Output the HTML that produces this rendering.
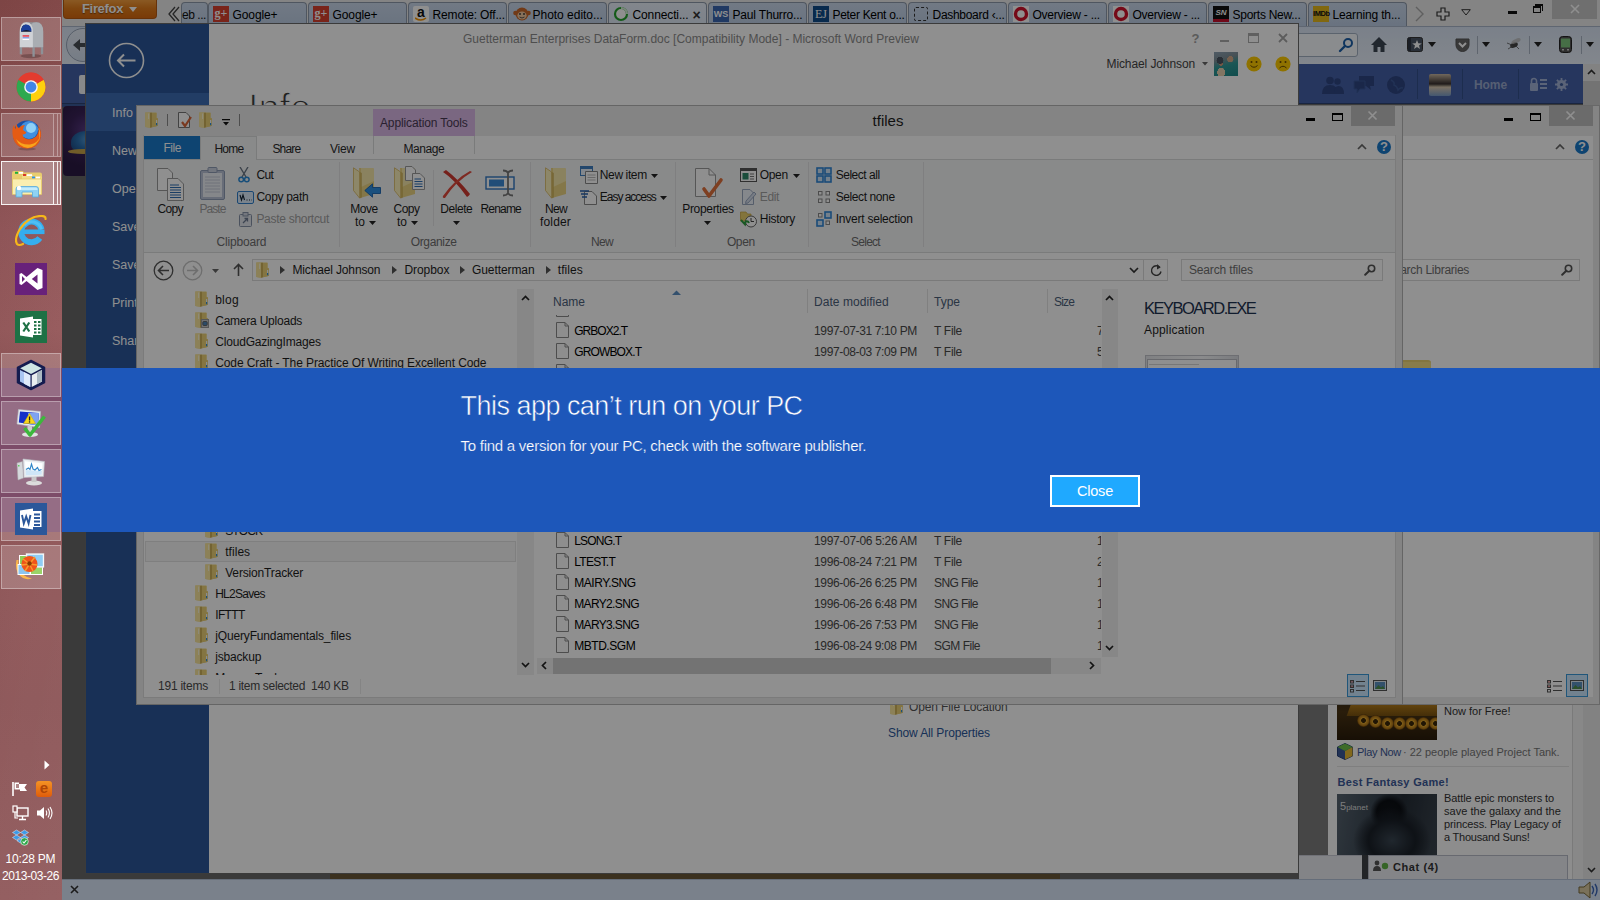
<!DOCTYPE html><html><head><meta charset="utf-8"><title>This app can't run on your PC</title><style>

html,body{margin:0;padding:0;}
body{width:1600px;height:900px;overflow:hidden;position:relative;background:#686868;font-family:"Liberation Sans", sans-serif;}
div,svg{position:absolute;box-sizing:border-box;}
.t{white-space:pre;}
.win{overflow:hidden;}

</style></head><body>
<div id="firefox" style="left:62px;top:0;width:1538px;height:900px;background:#686868;overflow:hidden">
<div style="left:0px;top:0px;width:1538px;height:26px;background:#ebebeb"></div>
<div style="left:1px;top:0px;width:94px;height:19px;background:linear-gradient(#f6a040,#e27d1c 45%,#d8690e);border:1px solid #b85a10;border-top:none;border-radius:0 0 4px 4px"></div>
<div class="t" style="left:20px;top:0.0px;height:18px;line-height:18px;font-size:13px;color:#fff;font-weight:bold;text-shadow:0 1px 1px rgba(0,0,0,.4);letter-spacing:-0.33px">Firefox</div>
<svg style="left:67px;top:7px;" width="8" height="5" viewBox="0 0 8 5"><path d="M0 0 H8 L4 5 Z" fill="#fff"/></svg>
<svg style="left:104px;top:5px;" width="14" height="18" viewBox="0 0 14 18"><path d="M9 2 L3 9 L9 16 M13 2 L7 9 L13 16" fill="none" stroke="#444" stroke-width="1.3"/></svg>
<div style="left:119px;top:2px;width:27px;height:24px;background:linear-gradient(#cbd9ec,#bccde4);border:1px solid #8e9aab;border-bottom:none;border-radius:4px 4px 0 0"></div>
<div class="t" style="left:120px;top:6.5px;height:17px;line-height:17px;font-size:12px;color:#111;letter-spacing:-0.45px">eb ...</div>
<div style="left:146px;top:2px;width:99px;height:24px;background:linear-gradient(#cbd9ec,#bccde4);border:1px solid #8e9aab;border-bottom:none;border-radius:4px 4px 0 0"></div>
<div style="left:151px;top:6px;width:16px;height:16px;background:#d8412f;color:#fff;font-size:12px;font-weight:bold;line-height:15px;text-align:center;font-family:'Liberation Serif',serif">g+</div>
<div class="t" style="left:170.5px;top:6.5px;height:17px;line-height:17px;font-size:12px;color:#000;letter-spacing:-0.10px">Google+</div>
<div style="left:246px;top:2px;width:99px;height:24px;background:linear-gradient(#cbd9ec,#bccde4);border:1px solid #8e9aab;border-bottom:none;border-radius:4px 4px 0 0"></div>
<div style="left:251px;top:6px;width:16px;height:16px;background:#d8412f;color:#fff;font-size:12px;font-weight:bold;line-height:15px;text-align:center;font-family:'Liberation Serif',serif">g+</div>
<div class="t" style="left:270.5px;top:6.5px;height:17px;line-height:17px;font-size:12px;color:#000;letter-spacing:-0.10px">Google+</div>
<div style="left:346px;top:2px;width:99px;height:24px;background:linear-gradient(#cbd9ec,#bccde4);border:1px solid #8e9aab;border-bottom:none;border-radius:4px 4px 0 0"></div>
<div style="left:351px;top:6px;width:16px;height:16px;background:#fff;color:#111;font-size:14px;font-weight:bold;line-height:12px;text-align:center;border-radius:2px">a</div>
<svg style="left:353px;top:17px;" width="12" height="5" viewBox="0 0 12 5"><path d="M0 1 Q6 5 11 1" fill="none" stroke="#f79400" stroke-width="1.6"/></svg>
<div class="t" style="left:370.5px;top:6.5px;height:17px;line-height:17px;font-size:12px;color:#000;letter-spacing:-0.14px">Remote: Off...</div>
<div style="left:446px;top:2px;width:99px;height:24px;background:linear-gradient(#cbd9ec,#bccde4);border:1px solid #8e9aab;border-bottom:none;border-radius:4px 4px 0 0"></div>
<svg style="left:451px;top:6px;" width="18" height="16" viewBox="0 0 18 16"><circle cx="9" cy="8" r="6.5" fill="#c9682a"/><circle cx="2.5" cy="7" r="2.3" fill="#c9682a"/><circle cx="15.5" cy="7" r="2.3" fill="#c9682a"/><ellipse cx="9" cy="9.5" rx="4.6" ry="4" fill="#f2c9a0"/><circle cx="7" cy="8" r=".9" fill="#333"/><circle cx="11" cy="8" r=".9" fill="#333"/><path d="M6.5 11 Q9 13 11.5 11" stroke="#333" fill="none" stroke-width=".8"/></svg>
<div class="t" style="left:470.5px;top:6.5px;height:17px;line-height:17px;font-size:12px;color:#000;letter-spacing:-0.02px">Photo edito...</div>
<div style="left:546px;top:2px;width:99px;height:24px;background:linear-gradient(#e9f0fa,#dde8f6);border:1px solid #8e9aab;border-bottom:none;border-radius:4px 4px 0 0"></div>
<svg style="left:551px;top:6px;" width="16" height="16" viewBox="0 0 16 16"><circle cx="8" cy="8" r="6" fill="#fff" stroke="#27a22d" stroke-width="2.2"/><path d="M8 2 A6 6 0 0 1 14 8" fill="none" stroke="#d5efd6" stroke-width="2.2"/></svg>
<div class="t" style="left:570.5px;top:6.5px;height:17px;line-height:17px;font-size:12px;color:#000;letter-spacing:-0.12px">Connecti...</div>
<div class="t" style="left:630.5px;top:4.5px;height:20px;line-height:20px;font-size:14px;color:#333;font-weight:bold">×</div>
<div style="left:646px;top:2px;width:99px;height:24px;background:linear-gradient(#cbd9ec,#bccde4);border:1px solid #8e9aab;border-bottom:none;border-radius:4px 4px 0 0"></div>
<div style="left:651px;top:6px;width:16px;height:16px;background:#3a66b0;color:#fff;font-size:9px;font-weight:bold;line-height:16px;text-align:center">WS</div>
<div class="t" style="left:670.5px;top:6.5px;height:17px;line-height:17px;font-size:12px;color:#000;letter-spacing:-0.18px">Paul Thurro...</div>
<div style="left:746px;top:2px;width:99px;height:24px;background:linear-gradient(#cbd9ec,#bccde4);border:1px solid #8e9aab;border-bottom:none;border-radius:4px 4px 0 0"></div>
<div style="left:751px;top:6px;width:16px;height:16px;background:#0f4c8a;color:#fff;font-size:12px;line-height:16px;text-align:center;font-family:'Liberation Serif',serif">EJ</div>
<div class="t" style="left:770.5px;top:6.5px;height:17px;line-height:17px;font-size:12px;color:#000;letter-spacing:-0.31px">Peter Kent o...</div>
<div style="left:846px;top:2px;width:99px;height:24px;background:linear-gradient(#cbd9ec,#bccde4);border:1px solid #8e9aab;border-bottom:none;border-radius:4px 4px 0 0"></div>
<div style="left:852px;top:7px;width:14px;height:14px;border:1px dashed #333;border-radius:2px"></div>
<div class="t" style="left:870.5px;top:6.5px;height:17px;line-height:17px;font-size:12px;color:#000;letter-spacing:-0.29px">Dashboard ‹...</div>
<div style="left:946px;top:2px;width:99px;height:24px;background:linear-gradient(#cbd9ec,#bccde4);border:1px solid #8e9aab;border-bottom:none;border-radius:4px 4px 0 0"></div>
<svg style="left:951px;top:6px;" width="16" height="16" viewBox="0 0 16 16"><rect width="16" height="16" fill="#fff"/><circle cx="8" cy="8" r="5.5" fill="none" stroke="#d0112b" stroke-width="3.4"/></svg>
<div class="t" style="left:970.5px;top:6.5px;height:17px;line-height:17px;font-size:12px;color:#000;letter-spacing:-0.23px">Overview - ...</div>
<div style="left:1046px;top:2px;width:99px;height:24px;background:linear-gradient(#cbd9ec,#bccde4);border:1px solid #8e9aab;border-bottom:none;border-radius:4px 4px 0 0"></div>
<svg style="left:1051px;top:6px;" width="16" height="16" viewBox="0 0 16 16"><rect width="16" height="16" fill="#fff"/><circle cx="8" cy="8" r="5.5" fill="none" stroke="#d0112b" stroke-width="3.4"/></svg>
<div class="t" style="left:1070.5px;top:6.5px;height:17px;line-height:17px;font-size:12px;color:#000;letter-spacing:-0.23px">Overview - ...</div>
<div style="left:1146px;top:2px;width:99px;height:24px;background:linear-gradient(#cbd9ec,#bccde4);border:1px solid #8e9aab;border-bottom:none;border-radius:4px 4px 0 0"></div>
<div style="left:1151px;top:6px;width:16px;height:16px;background:#111;color:#fff;font-size:8px;font-weight:bold;font-style:italic;line-height:14px;text-align:center;border-bottom:3px solid #c8102e">SN</div>
<div class="t" style="left:1170.5px;top:6.5px;height:17px;line-height:17px;font-size:12px;color:#000;letter-spacing:-0.26px">Sports New...</div>
<div style="left:1246px;top:2px;width:99px;height:24px;background:linear-gradient(#cbd9ec,#bccde4);border:1px solid #8e9aab;border-bottom:none;border-radius:4px 4px 0 0"></div>
<div style="left:1251px;top:6px;width:16px;height:16px;background:#e6b91e;color:#111;font-size:7.5px;font-weight:bold;line-height:16px;text-align:center;letter-spacing:-.4px">IMDb</div>
<div class="t" style="left:1270.5px;top:6.5px;height:17px;line-height:17px;font-size:12px;color:#000;letter-spacing:-0.15px">Learning th...</div>
<svg style="left:1352px;top:5px;" width="12" height="18" viewBox="0 0 12 18"><path d="M2 2 L9 9 L2 16" fill="none" stroke="#aaa" stroke-width="1.4"/></svg>
<svg style="left:1374px;top:7px;" width="14" height="14" viewBox="0 0 14 14"><path d="M5 1 H9 V5 H13 V9 H9 V13 H5 V9 H1 V5 H5 Z" fill="#f4f4f4" stroke="#333" stroke-width="1.2"/></svg>
<svg style="left:1399px;top:9px;" width="10" height="7" viewBox="0 0 10 7"><path d="M.7 .7 H9.3 L5 6 Z" fill="#f4f4f4" stroke="#333" stroke-width="1"/></svg>
<div style="left:1446px;top:11px;width:9px;height:3px;background:#111"></div>
<div style="left:1471px;top:6px;width:8px;height:7px;border:1px solid #111;border-top-width:2px"></div>
<div style="left:1473px;top:4px;width:8px;height:7px;border:1px solid #111;border-top-width:2px;border-left:none;border-bottom:none"></div>
<div style="left:1490px;top:0px;width:45px;height:19px;background:#c7c7c7"></div>
<svg style="left:1508px;top:4px;" width="10" height="10" viewBox="0 0 10 10"><path d="M1 1 L9 9 M9 1 L1 9" stroke="#fff" stroke-width="1.6"/></svg>
<div style="left:0px;top:26px;width:1538px;height:38px;background:linear-gradient(#dae5f5,#e9f0fa);border-top:1px solid #aab7c9"></div>
<div style="left:4px;top:28px;width:34px;height:34px;border-radius:50%;background:linear-gradient(#e6edf8,#d3deee);border:1px solid #9aa6ba"></div>
<svg style="left:10px;top:36px;" width="18" height="18" viewBox="0 0 18 18"><path d="M16 7 H8 V3 L1 9 L8 15 V11 H16 Z" fill="#4a4f57"/></svg>
<div style="left:1138px;top:33px;width:158px;height:24px;background:#f6f9fd;border:1px solid #a3b0c3;border-radius:3px"></div>
<svg style="left:1276px;top:37px;" width="16" height="16" viewBox="0 0 16 16"><circle cx="10" cy="6" r="4" fill="none" stroke="#1c5fa8" stroke-width="2"/><path d="M7 9 L2 14" stroke="#1c5fa8" stroke-width="2.4" stroke-linecap="round"/></svg>
<svg style="left:1308px;top:36px;" width="18" height="17" viewBox="0 0 18 17"><path d="M9 1 L1 9 H3.5 V16 H7.5 V11 H10.5 V16 H14.5 V9 H17 Z" fill="#3c4652"/></svg>
<svg style="left:1345px;top:37px;" width="16" height="15" viewBox="0 0 16 15"><rect x=".5" y=".5" width="15" height="14" rx="2" fill="#4a5564" stroke="#333"/><rect x="1" y="1" width="3" height="13" fill="#2f3742"/><path d="M10 3 L11.3 6.3 L14.8 6.4 L12 8.6 L13 12 L10 10 L7 12 L8 8.6 L5.2 6.4 L8.7 6.3 Z" fill="#fff"/></svg>
<svg style="left:1366px;top:42px;" width="8" height="5" viewBox="0 0 8 5"><path d="M0 0 H8 L4 5 Z" fill="#222"/></svg>
<svg style="left:1393px;top:38px;" width="15" height="14" viewBox="0 0 15 14"><path d="M1 1 H14 V7 A6.5 6.5 0 0 1 1 7 Z" fill="#666" stroke="#555"/><path d="M4 5 L7.5 8.5 L11 5" fill="none" stroke="#fff" stroke-width="2"/></svg>
<div style="left:1415px;top:36px;width:1px;height:18px;background:#a9b4c4"></div>
<svg style="left:1420px;top:42px;" width="8" height="5" viewBox="0 0 8 5"><path d="M0 0 H8 L4 5 Z" fill="#222"/></svg>
<svg style="left:1443px;top:36px;" width="18" height="16" viewBox="0 0 18 16"><ellipse cx="9" cy="9" rx="4" ry="2.6" fill="#444" transform="rotate(-25 9 9)"/><ellipse cx="11" cy="5" rx="5" ry="2" fill="#bbb" opacity=".8" transform="rotate(-25 11 5)"/><path d="M2 7 L7 9 M3 13 L8 10 M14 13 L11 10" stroke="#555" stroke-width=".8"/></svg>
<div style="left:1467px;top:36px;width:1px;height:18px;background:#a9b4c4"></div>
<svg style="left:1472px;top:42px;" width="8" height="5" viewBox="0 0 8 5"><path d="M0 0 H8 L4 5 Z" fill="#222"/></svg>
<svg style="left:1497px;top:36px;" width="13" height="17" viewBox="0 0 13 17"><rect x=".5" y=".5" width="12" height="16" rx="3" fill="#555" stroke="#222"/><rect x="2" y="2.5" width="9" height="9" fill="#7ec47e"/><rect x="3" y="13" width="2" height="1.5" fill="#ccc"/><rect x="8" y="13" width="2" height="1.5" fill="#ccc"/></svg>
<div style="left:1519px;top:36px;width:1px;height:18px;background:#a9b4c4"></div>
<svg style="left:1524px;top:42px;" width="8" height="5" viewBox="0 0 8 5"><path d="M0 0 H8 L4 5 Z" fill="#222"/></svg>
<div style="left:0px;top:64px;width:1521px;height:40px;background:#4561a8;border-bottom:1px solid #2d4373"></div>
<svg style="left:1260px;top:75px;" width="22" height="20" viewBox="0 0 22 20"><circle cx="8" cy="5.5" r="3.8" fill="#2f4682"/><path d="M0 19 Q0 10 8 10 Q16 10 16 19 Z" fill="#2f4682"/><circle cx="15.5" cy="6.5" r="3.2" fill="#2f4682"/><path d="M12 19 Q12 11 16.5 11 Q22 11 22 19 Z" fill="#2f4682"/></svg>
<svg style="left:1291px;top:75px;" width="22" height="20" viewBox="0 0 22 20"><path d="M6 1 H21 V11 H17 L18 15 L13 11 H6 Z" fill="#2f4682"/><path d="M1 6 H12 V14 H7 L4 18 V14 H1 Z" fill="#2f4682" stroke="#3b5998" stroke-width="1"/></svg>
<svg style="left:1324px;top:75px;" width="20" height="20" viewBox="0 0 20 20"><circle cx="10" cy="10" r="9" fill="#2f4682"/><path d="M5 5 Q9 7 8 10 Q11 11 12 15 Q14 12 17 13" stroke="#3b5998" stroke-width="1.5" fill="none"/></svg>
<div style="left:1355px;top:69px;width:1px;height:30px;background:#34508b"></div>
<div style="left:1367px;top:74px;width:22px;height:22px;background:linear-gradient(180deg,#c9b8a4 0%,#3a3230 45%,#d9c8b0 60%,#7a9cc8 100%);border-radius:2px"></div>
<div style="left:1400px;top:69px;width:1px;height:30px;background:#34508b"></div>
<div class="t" style="left:1412px;top:76.5px;height:17px;line-height:17px;font-size:12px;color:#9aa9cd;font-weight:bold;letter-spacing:-0.09px">Home</div>
<div style="left:1456px;top:69px;width:1px;height:30px;background:#34508b"></div>
<svg style="left:1468px;top:77px;" width="17" height="14" viewBox="0 0 17 14"><rect x="0" y="6" width="8" height="8" rx="1" fill="#a3b2d6"/><path d="M1.5 6 V4 A2.5 2.5 0 0 1 6.500 4 V6" fill="none" stroke="#a3b2d6" stroke-width="1.6"/><rect x="10" y="2" width="7" height="2" fill="#a3b2d6"/><rect x="10" y="6" width="7" height="2" fill="#a3b2d6"/><rect x="10" y="10" width="7" height="2" fill="#a3b2d6"/></svg>
<svg style="left:1493px;top:78px;" width="13" height="13" viewBox="0 0 13 13"><circle cx="6.5" cy="6.5" r="3.4" fill="none" stroke="#a3b2d6" stroke-width="2.4"/><path d="M6.5 0 V13 M0 6.5 H13 M1.9 1.9 L11.1 11.1 M11.1 1.9 L1.9 11.1" stroke="#a3b2d6" stroke-width="1.8"/><circle cx="6.5" cy="6.5" r="1.6" fill="#3b5998"/></svg>
<div style="left:1521px;top:64px;width:17px;height:815px;background:#e8e8e8"></div>
<svg style="left:1525px;top:69px;" width="9" height="6" viewBox="0 0 9 6"><path d="M1 5 L4.5 1.500 L8 5" fill="none" stroke="#333" stroke-width="1.6"/></svg>
<div style="left:1521px;top:81px;width:17px;height:30px;background:#cdcdcd"></div>
<svg style="left:1525px;top:867px;" width="9" height="6" viewBox="0 0 9 6"><path d="M1 1 L4.5 4.500 L8 1" fill="none" stroke="#333" stroke-width="1.6"/></svg>
<div style="left:0px;top:104px;width:40px;height:3px;background:#3b5998"></div>
<div style="left:17px;top:75px;width:30px;height:19px;background:#f3f4f7;border-radius:2px 0 0 2px"></div>
<div style="left:1px;top:106px;width:40px;height:70px;background:radial-gradient(circle at 60% 35%,#5a3a86 0,#3a2258 35%,#2c1a44 70%);border-radius:4px 0 0 4px"></div>
<div style="left:9px;top:131px;width:30px;height:22px;background:radial-gradient(ellipse at 60% 40%,#5aa0d8 0,#2a6fb0 45%,#1f4f8a 80%);border-radius:50% 50% 40% 40%"></div>
<div style="left:6px;top:149px;width:30px;height:5px;background:#c9a64a;border-radius:50%"></div>
<div style="left:1237px;top:690px;width:29px;height:190px;background:#7d7d7d"></div>
<div style="left:1266px;top:690px;width:245px;height:190px;background:#fbfbfb;border-right:1px solid #d9d9d9"></div>
<div style="left:1511px;top:690px;width:10px;height:190px;background:#f3f3f3"></div>
<div style="left:1275px;top:700px;width:100px;height:40px;overflow:hidden;background:linear-gradient(#3a2c18 0,#4a3414 30%,#2a1c0a 100%)">
<div style="left:12px;top:3px;width:95px;height:13px;background:linear-gradient(#b8801c,#7a5210);transform:skewX(-20deg)"></div>
<div style="left:20px;top:14px;width:13px;height:13px;border-radius:50%;background:radial-gradient(circle,#3a2608 0,#3a2608 22%,#e0a52c 30%,#b67a18 55%,#5a3a0c 70%)"></div>
<div style="left:32px;top:15px;width:13px;height:13px;border-radius:50%;background:radial-gradient(circle,#3a2608 0,#3a2608 22%,#e0a52c 30%,#b67a18 55%,#5a3a0c 70%)"></div>
<div style="left:44px;top:17px;width:13px;height:13px;border-radius:50%;background:radial-gradient(circle,#3a2608 0,#3a2608 22%,#e0a52c 30%,#b67a18 55%,#5a3a0c 70%)"></div>
<div style="left:56px;top:17px;width:13px;height:13px;border-radius:50%;background:radial-gradient(circle,#3a2608 0,#3a2608 22%,#e0a52c 30%,#b67a18 55%,#5a3a0c 70%)"></div>
<div style="left:68px;top:17px;width:13px;height:13px;border-radius:50%;background:radial-gradient(circle,#3a2608 0,#3a2608 22%,#e0a52c 30%,#b67a18 55%,#5a3a0c 70%)"></div>
<div style="left:80px;top:17px;width:13px;height:13px;border-radius:50%;background:radial-gradient(circle,#3a2608 0,#3a2608 22%,#e0a52c 30%,#b67a18 55%,#5a3a0c 70%)"></div>
<div style="left:92px;top:17px;width:13px;height:13px;border-radius:50%;background:radial-gradient(circle,#3a2608 0,#3a2608 22%,#e0a52c 30%,#b67a18 55%,#5a3a0c 70%)"></div>
</div>
<div class="t" style="left:1382px;top:703.5px;height:15px;line-height:15px;font-size:11px;color:#333;letter-spacing:-0.01px">Now for Free!</div>
<svg style="left:1275px;top:743px;" width="16" height="17" viewBox="0 0 16 17"><path d="M8 .5 L15.5 4 V13 L8 16.5 L.5 13 V4 Z" fill="#3b5998" stroke="#27407a"/><path d="M8 8 L15.5 4 V13 L8 16.5 Z" fill="#e8b930"/><path d="M8 .5 L15.5 4 L8 8 L.5 4 Z" fill="#6fc04a"/></svg>
<div class="t" style="left:1295px;top:744.5px;height:15px;line-height:15px;font-size:11px;color:#3b5998;letter-spacing:-0.31px">Play Now</div>
<div class="t" style="left:1341px;top:744.5px;height:15px;line-height:15px;font-size:11px;color:#777;letter-spacing:-0.01px">· 22 people played Project Tank.</div>
<div style="left:1275px;top:766px;width:232px;height:1px;background:#e3e3e3"></div>
<div class="t" style="left:1275.5px;top:774.5px;height:15px;line-height:15px;font-size:11px;color:#3b5998;font-weight:bold;letter-spacing:0.32px">Best Fantasy Game!</div>
<div style="left:1275px;top:794px;width:100px;height:62px;background:radial-gradient(ellipse at 55% 75%,#3a4652 0,#1a2028 30%,transparent 50%),radial-gradient(circle at 52% 30%,#10141a 0,#0c0f14 18%,transparent 28%),linear-gradient(100deg,#56636f 0,#3c4854 35%,#252d36 60%,#3a444e 100%)"></div>
<div class="t" style="left:1278px;top:798.5px;height:15px;line-height:15px;font-size:11px;color:#ddd;">5<span style='font-size:8px'>planet</span></div>
<div class="t" style="left:1382px;top:790.5px;height:15px;line-height:15px;font-size:11px;color:#333;letter-spacing:-0.08px">Battle epic monsters to</div>
<div class="t" style="left:1382px;top:803.5px;height:15px;line-height:15px;font-size:11px;color:#333;letter-spacing:0.03px">save the galaxy and the</div>
<div class="t" style="left:1382px;top:816.5px;height:15px;line-height:15px;font-size:11px;color:#333;letter-spacing:-0.11px">princess. Play Legacy of</div>
<div class="t" style="left:1382px;top:829.5px;height:15px;line-height:15px;font-size:11px;color:#333;letter-spacing:-0.22px">a Thousand Suns!</div>
<div style="left:1237px;top:855px;width:70px;height:24px;background:#e9ebf0;border-top:1px solid #c9ccd6"></div>
<div style="left:1300px;top:855px;width:6px;height:24px;background:#3d4046"></div>
<div style="left:1306px;top:855px;width:200px;height:24px;background:#eceef3;border:1px solid #b8bcc8;border-bottom:none"></div>
<svg style="left:1311px;top:860px;" width="18" height="12" viewBox="0 0 18 12"><circle cx="4" cy="3" r="2.4" fill="#555"/><path d="M0 11 Q0 6 4 6 Q8 6 8 11 Z" fill="#555"/><circle cx="12" cy="6" r="3.2" fill="#5fb346"/></svg>
<div class="t" style="left:1331px;top:859.5px;height:15px;line-height:15px;font-size:11px;color:#333;font-weight:bold;letter-spacing:0.59px">Chat (4)</div>
<div style="left:0px;top:873px;width:1237px;height:6px;background:#686868"></div>
<div style="left:268px;top:873px;width:730px;height:6px;background:#6a5838"></div>
<div style="left:0px;top:879px;width:1538px;height:21px;background:#dae6f8;border-top:1px solid #b5c3d8"></div>
<svg style="left:8px;top:885px;" width="9" height="9" viewBox="0 0 9 9"><path d="M1 1 L8 8 M8 1 L1 8" stroke="#333" stroke-width="1.6"/></svg>
<svg style="left:1516px;top:881px;" width="22" height="18" viewBox="0 0 22 18"><path d="M1 6 H6 L12 1 V17 L6 12 H1 Z" fill="#d9c9a0" stroke="#7a6a3a"/><path d="M14 5 Q17 9 14 13 M17 3 Q21 9 17 15" fill="none" stroke="#3c66b8" stroke-width="1.4"/></svg>
</div>
<div id="word" class="win" style="left:85px;top:23px;width:1214px;height:851px;background:#fff;border:1px solid #6a6a6a">
<div style="left:0px;top:0px;width:123px;height:850px;background:#2b579a"></div>
<div style="left:0px;top:69px;width:123px;height:38px;background:#3e6db5"></div>
<svg style="left:22px;top:18px;" width="37" height="37" viewBox="0 0 37 37"><circle cx="18.5" cy="18.5" r="17" fill="none" stroke="#fff" stroke-width="1.6"/><path d="M27.500 18.500 H10.500 M16 12.500 L10 18.500 L16 24.500" fill="none" stroke="#fff" stroke-width="2"/></svg>
<div class="t" style="left:26px;top:80.0px;height:18px;line-height:18px;font-size:12.5px;color:#fff;">Info</div>
<div class="t" style="left:26px;top:118.0px;height:18px;line-height:18px;font-size:12.5px;color:#fff;">New</div>
<div class="t" style="left:26px;top:156.0px;height:18px;line-height:18px;font-size:12.5px;color:#fff;">Open</div>
<div class="t" style="left:26px;top:194.0px;height:18px;line-height:18px;font-size:12.5px;color:#fff;">Save</div>
<div class="t" style="left:26px;top:232.0px;height:18px;line-height:18px;font-size:12.5px;color:#fff;">Save As</div>
<div class="t" style="left:26px;top:270.0px;height:18px;line-height:18px;font-size:12.5px;color:#fff;">Print</div>
<div class="t" style="left:26px;top:308.0px;height:18px;line-height:18px;font-size:12.5px;color:#fff;">Share</div>
<div class="t" style="left:26px;top:346.0px;height:18px;line-height:18px;font-size:12.5px;color:#fff;">Export</div>
<div class="t" style="left:26px;top:384.0px;height:18px;line-height:18px;font-size:12.5px;color:#fff;">Close</div>
<div class="t" style="left:377px;top:6.5px;height:17px;line-height:17px;font-size:12px;color:#8b8b8b;">Guetterman Enterprises DataForm.doc [Compatibility Mode] - Microsoft Word Preview</div>
<div class="t" style="left:1105.5px;top:5.5px;height:18px;line-height:18px;font-size:13px;color:#a3a3a3;font-weight:bold">?</div>
<div style="left:1134px;top:16px;width:9px;height:2px;background:#ababab"></div>
<div style="left:1162px;top:9px;width:11px;height:10px;border:1px solid #ababab;border-top-width:3px"></div>
<svg style="left:1192px;top:9px;" width="10" height="10" viewBox="0 0 10 10"><path d="M1 1 L9 9 M9 1 L1 9" stroke="#a5a5a5" stroke-width="1.8"/></svg>
<div class="t" style="left:1020.5px;top:32.0px;height:17px;line-height:17px;font-size:12px;color:#444;letter-spacing:-0.10px">Michael Johnson</div>
<svg style="left:1115.5px;top:38px;" width="6" height="3.5" viewBox="0 0 6 3.5"><path d="M0 0 H6 L3 3.500 Z" fill="#666"/></svg>
<div style="left:1128px;top:28px;width:24px;height:24px;background:radial-gradient(circle at 25% 35%,#4a5560 0,#4a5560 14%,transparent 15%),radial-gradient(circle at 68% 30%,#d2a98a 0,#d2a98a 13%,transparent 14%),radial-gradient(circle at 28% 48%,#c99a7c 0,#c99a7c 10%,transparent 11%),radial-gradient(ellipse at 30% 85%,#e8d0b0 0,#e8d0b0 16%,transparent 17%),linear-gradient(165deg,#8fa3b5 0,#7f9098 30%,#2f9a98 55%,#1f8a8a 100%)"></div>
<svg style="left:1160px;top:32px;" width="16" height="16" viewBox="0 0 16 16"><circle cx="8" cy="8" r="7.6" fill="#ffcc00"/><circle cx="5.500" cy="6" r="1" fill="#6b4d00"/><circle cx="10.500" cy="6" r="1" fill="#6b4d00"/><path d="M4.500 9.500 Q8 13 11.500 9.500" fill="none" stroke="#6b4d00" stroke-width="1"/></svg>
<svg style="left:1189px;top:32px;" width="16" height="16" viewBox="0 0 16 16"><circle cx="8" cy="8" r="7.6" fill="#ffcc00"/><circle cx="5.500" cy="6" r="1" fill="#6b4d00"/><circle cx="10.500" cy="6" r="1" fill="#6b4d00"/><path d="M4.500 12 Q8 8.500 11.500 12" fill="none" stroke="#6b4d00" stroke-width="1"/></svg>
<div class="t" style="left:162.4px;top:63.5px;font-size:42px;line-height:42px;color:#3c3c3c;transform:scaleX(.9);transform-origin:0 0;-webkit-text-stroke:1.3px #fff">Info</div>
<svg style="left:804px;top:675px;" width="14" height="16" viewBox="0 0 14 16"><path d="M.3 .5 H11.500 V6 L13 6.500 V13.500 L11.500 14.200 L5 15.800 L.3 15 Z" fill="#f1d980"/><path d="M7 1 H11.500 V6 L13 6.500 V13.500 L11.500 14.200 L7 15.300 Z" fill="#ecd177"/><path d="M.3 .5 H5 V15.800 L.3 15 Z" fill="#f9e79e"/><path d="M5 .8 H7 V15.300 L5 15.800 Z" fill="#cdb05a"/><path d="M3.600 1.500 V7" stroke="#fffbe8" stroke-width=".8"/><rect x="11" y="8" width="1.200" height="5" fill="#f4f9fd"/><rect x="11" y="11" width="1.200" height="2.200" fill="#2f8fdc"/></svg>
<div class="t" style="left:823px;top:674.5px;height:17px;line-height:17px;font-size:12px;color:#555;letter-spacing:-0.12px">Open File Location</div>
<div class="t" style="left:802px;top:701.0px;height:17px;line-height:17px;font-size:12px;color:#2b579a;letter-spacing:-0.11px">Show All Properties</div>
</div>
<div style="left:1100px;top:105px;width:500px;height:600px;background:#ebebeb;border:1px solid #b9b9b9"></div>
<div style="left:1108px;top:136px;width:485px;height:561px;background:#fff"></div>
<div style="left:1108px;top:159px;width:485px;height:1px;background:#dadbdc"></div>
<div style="left:1549px;top:106px;width:44px;height:20px;background:#bfbfbf"></div>
<svg style="left:1565px;top:110px;" width="11" height="11" viewBox="0 0 11 11"><path d="M1.500 1.500 L9.500 9.500 M9.500 1.500 L1.500 9.500" stroke="#fff" stroke-width="1.7"/></svg>
<div style="left:1530px;top:113px;width:11px;height:8px;border:1px solid #000;border-top-width:2px"></div>
<div style="left:1504px;top:118px;width:9px;height:3px;background:#000"></div>
<svg style="left:1555px;top:143px;" width="10" height="7" viewBox="0 0 10 7"><path d="M1 6 L5 2 L9 6" fill="none" stroke="#666" stroke-width="1.700"/></svg>
<div style="left:1575px;top:140px;width:14px;height:14px;border-radius:50%;background:#1979ca;color:#fff;font-size:13px;font-weight:bold;line-height:14px;text-align:center">?</div>
<div style="left:1378px;top:259px;width:202px;height:22px;background:#fff;border:1px solid #d9d9d9"></div>
<div class="t" style="left:1386px;top:261.5px;height:17px;line-height:17px;font-size:12px;color:#707070;letter-spacing:-0.27px">Search Libraries</div>
<svg style="left:1561px;top:264px;" width="12" height="12" viewBox="0 0 12 12"><circle cx="7.500" cy="4.500" r="3.200" fill="none" stroke="#555" stroke-width="1.600"/><path d="M5.300 6.700 L1.200 10.800" stroke="#555" stroke-width="2" stroke-linecap="round"/></svg>
<div style="left:1402px;top:360px;width:29px;height:40px;background:#f3dd84;border-top:2px solid #e9d070;border-radius:0 3px 0 0"></div>
<div style="left:1108px;top:675px;width:485px;height:22px;background:#fff"></div>
<div style="left:1544px;top:674px;width:22px;height:23px;"></div>
<div style="left:1566px;top:674px;width:22px;height:23px;background:#cce8ff;border:1px solid #3a9ad9"></div>
<svg style="left:1547px;top:679px;" width="16" height="14" viewBox="0 0 16 14"><g fill="none" stroke="#555" stroke-width="1"><rect x=".5" y="1.500" width="3" height="2.500"/><rect x=".5" y="6" width="3" height="2.500"/><rect x=".5" y="10.500" width="3" height="2.500"/></g><path d="M6 2.500 H15 M6 7 H15 M6 11.500 H15" stroke="#555" stroke-width="1"/><rect x="1.300" y="2.300" width="1.300" height="1" fill="#c33"/><rect x="1.300" y="6.800" width="1.300" height="1" fill="#c33"/></svg>
<svg style="left:1570px;top:680px;" width="14" height="11" viewBox="0 0 14 11"><rect x=".5" y=".5" width="13" height="10" fill="#dfe9f2" stroke="#555"/><rect x="2" y="2" width="10" height="7" fill="#5b90c0"/><path d="M2 9 L5.500 5 L8 7.500 L10 6 L12 9 Z" fill="#4e8f4e"/></svg>
<div style="left:136px;top:105px;width:1267px;height:600px;background:#ebebeb;border:1px solid #b5b5b5"></div>
<div style="left:143px;top:135px;width:1253px;height:563px;border:1px solid #dcdcdc;border-top:none"></div>
<svg style="left:145px;top:112px;" width="14" height="16" viewBox="0 0 14 16"><path d="M.3 .5 H11.500 V6 L13 6.500 V13.500 L11.500 14.200 L5 15.800 L.3 15 Z" fill="#f1d980"/><path d="M7 1 H11.500 V6 L13 6.500 V13.500 L11.500 14.200 L7 15.300 Z" fill="#ecd177"/><path d="M.3 .5 H5 V15.800 L.3 15 Z" fill="#f9e79e"/><path d="M5 .8 H7 V15.300 L5 15.800 Z" fill="#cdb05a"/><path d="M3.600 1.500 V7" stroke="#fffbe8" stroke-width=".8"/><rect x="11" y="8" width="1.200" height="5" fill="#f4f9fd"/><rect x="11" y="11" width="1.200" height="2.200" fill="#2f8fdc"/></svg>
<div style="left:167px;top:114px;width:1px;height:12px;background:#8a8a8a"></div>
<svg style="left:177px;top:112px;" width="16" height="16" viewBox="0 0 16 16"><path d="M1.500 .5 H9 L12.500 4 V15.500 H1.500 Z" fill="#fff" stroke="#777"/><path d="M5 10 L8 14 L14 5" fill="none" stroke="#d9673a" stroke-width="2.200"/></svg>
<svg style="left:199px;top:112px;" width="14" height="16" viewBox="0 0 14 16"><path d="M.3 .5 H11.500 V6 L13 6.500 V13.500 L11.500 14.200 L5 15.800 L.3 15 Z" fill="#f1d980"/><path d="M7 1 H11.500 V6 L13 6.500 V13.500 L11.500 14.200 L7 15.300 Z" fill="#ecd177"/><path d="M.3 .5 H5 V15.800 L.3 15 Z" fill="#f9e79e"/><path d="M5 .8 H7 V15.300 L5 15.800 Z" fill="#cdb05a"/><path d="M3.600 1.500 V7" stroke="#fffbe8" stroke-width=".8"/><rect x="11" y="8" width="1.200" height="5" fill="#f4f9fd"/><rect x="11" y="11" width="1.200" height="2.200" fill="#2f8fdc"/></svg>
<svg style="left:221.5px;top:119px;" width="8" height="7" viewBox="0 0 8 7"><path d="M0 0 H8 V1.300 H0 Z M1 3 H7 L4 6.500 Z" fill="#111"/></svg>
<div style="left:239px;top:114px;width:1px;height:12px;background:#8a8a8a"></div>
<div style="left:373px;top:109px;width:102px;height:27px;background:#d9b8e6"></div>
<div class="t" style="left:380px;top:114.5px;height:17px;line-height:17px;font-size:12px;color:#4a3a55;letter-spacing:-0.13px">Application Tools</div>
<div class="t" style="left:872.5px;top:109.5px;height:21px;line-height:21px;font-size:15px;color:#1e1e1e;letter-spacing:0.03px">tfiles</div>
<div style="left:1351px;top:106px;width:44px;height:20px;background:#bfbfbf"></div>
<svg style="left:1367px;top:110px;" width="11" height="11" viewBox="0 0 11 11"><path d="M1.500 1.500 L9.500 9.500 M9.500 1.500 L1.500 9.500" stroke="#fff" stroke-width="1.7"/></svg>
<div style="left:1332px;top:113px;width:11px;height:8px;border:1px solid #000;border-top-width:2px"></div>
<div style="left:1306px;top:118px;width:9px;height:3px;background:#000"></div>
<div style="left:144px;top:136px;width:1251px;height:24px;background:#fff;border-bottom:1px solid #dadbdc"></div>
<div style="left:144px;top:136px;width:56px;height:23px;background:#1979ca"></div>
<div class="t" style="left:163.4px;top:139.5px;height:17px;line-height:17px;font-size:12px;color:#fff;letter-spacing:-0.44px">File</div>
<div style="left:200px;top:136px;width:57px;height:24px;background:#f5f6f7;border:1px solid #dadbdc;border-bottom:none"></div>
<div class="t" style="left:214.4px;top:140.5px;height:17px;line-height:17px;font-size:12px;color:#2b2b2b;letter-spacing:-0.75px">Home</div>
<div class="t" style="left:272.4px;top:140.5px;height:17px;line-height:17px;font-size:12px;color:#2b2b2b;letter-spacing:-0.81px">Share</div>
<div class="t" style="left:330px;top:140.5px;height:17px;line-height:17px;font-size:12px;color:#2b2b2b;letter-spacing:-0.20px">View</div>
<div style="left:373px;top:136px;width:1px;height:18px;background:#dadbdc"></div>
<div style="left:474px;top:136px;width:1px;height:18px;background:#dadbdc"></div>
<div class="t" style="left:403.4px;top:140.5px;height:17px;line-height:17px;font-size:12px;color:#2b2b2b;letter-spacing:-0.40px">Manage</div>
<svg style="left:1357px;top:143px;" width="10" height="7" viewBox="0 0 10 7"><path d="M1 6 L5 2 L9 6" fill="none" stroke="#666" stroke-width="1.700"/></svg>
<div style="left:1377px;top:140px;width:14px;height:14px;border-radius:50%;background:#1979ca;color:#fff;font-size:13px;font-weight:bold;line-height:14px;text-align:center">?</div>
<div style="left:144px;top:160px;width:1251px;height:93px;background:#f5f6f7;border-bottom:1px solid #dadbdc"></div>
<div style="left:339px;top:162px;width:1px;height:85px;background:#e2e3e4"></div>
<div style="left:530px;top:162px;width:1px;height:85px;background:#e2e3e4"></div>
<div style="left:675px;top:162px;width:1px;height:85px;background:#e2e3e4"></div>
<div style="left:808px;top:162px;width:1px;height:85px;background:#e2e3e4"></div>
<div style="left:923px;top:162px;width:1px;height:85px;background:#e2e3e4"></div>
<svg style="left:157px;top:168px;" width="28" height="33" viewBox="0 0 28 33"><path d="M.5 .5 H11 L15.500 5 V22.500 H.5 Z" fill="#fff" stroke="#9a9a9a"/><path d="M10.500 10.500 H21 L26.500 16 V32.500 H10.500 Z" fill="#fff" stroke="#9a9a9a"/><path d="M13 17 H22 M13 19.500 H24 M13 22 H24 M13 24.500 H24 M13 27 H24 M13 29.500 H24" stroke="#2f6fb5" stroke-width="1.200"/></svg>
<div class="t" style="left:110.19999999999999px;width:120px;text-align:center;top:201px;height:16px;line-height:16px;font-size:12px;color:#1e1e1e;letter-spacing:-0.60px">Copy</div>
<svg style="left:200px;top:167px;" width="25" height="33" viewBox="0 0 25 33"><rect x=".5" y="3.500" width="24" height="29" rx="1.500" fill="#b9c3d6" stroke="#8e9bb5"/><rect x="3" y="6" width="19" height="24" fill="#eef1f6"/><rect x="8" y=".5" width="9" height="5" rx="1" fill="#ccd3e0" stroke="#8e9bb5"/><path d="M5 10 H20 M5 13 H20 M5 16 H20 M5 19 H20 M5 22 H20 M5 25 H20" stroke="#c5ccda" stroke-width="1"/></svg>
<div class="t" style="left:152.5px;width:120px;text-align:center;top:201px;height:16px;line-height:16px;font-size:12px;color:#a0a0a0;letter-spacing:-0.94px">Paste</div>
<svg style="left:238px;top:167px;" width="12" height="16" viewBox="0 0 12 16"><path d="M2 0 L8 10 M10 0 L4 10" stroke="#6b7785" stroke-width="1.400"/><circle cx="3.200" cy="12.500" r="2.300" fill="none" stroke="#2a8bd8" stroke-width="1.500"/><circle cx="8.800" cy="12.500" r="2.300" fill="none" stroke="#2a8bd8" stroke-width="1.500"/></svg>
<div class="t" style="left:256.4px;top:166.5px;height:17px;line-height:17px;font-size:12px;color:#1e1e1e;letter-spacing:-0.56px">Cut</div>
<svg style="left:237px;top:191px;" width="17" height="13" viewBox="0 0 17 13"><rect x=".5" y=".5" width="16" height="12" rx="1.500" fill="#dcecfb" stroke="#2f7fcc"/><path d="M3 4 L4.500 9 L6 4 L7.500 9 M9.500 9 H10.500 M12 9 H13 M14.500 9 H15" stroke="#123" stroke-width="1.100" fill="none"/></svg>
<div class="t" style="left:256.4px;top:188.5px;height:17px;line-height:17px;font-size:12px;color:#1e1e1e;letter-spacing:-0.30px">Copy path</div>
<svg style="left:239px;top:212px;" width="13" height="15" viewBox="0 0 13 15"><rect x=".5" y="2.500" width="12" height="12" rx="1" fill="#e3e7ee" stroke="#8793a8"/><rect x="4" y=".5" width="5" height="3.500" fill="#cfd5e0" stroke="#8793a8"/><path d="M4 11 L8.500 6.500 M5.500 6.500 H8.500 V9.500" stroke="#6d7a90" stroke-width="1.300" fill="none"/></svg>
<div class="t" style="left:256.4px;top:210.5px;height:17px;line-height:17px;font-size:12px;color:#a0a0a0;letter-spacing:-0.29px">Paste shortcut</div>
<div class="t" style="left:181.4px;width:120px;text-align:center;top:234px;height:16px;line-height:16px;font-size:12px;color:#6d6d6d;letter-spacing:-0.15px">Clipboard</div>
<svg style="left:353px;top:167px;" width="22" height="32" viewBox="0 0 22 32"><path d="M6 1 H19.500 Q21 1 21 2.500 V27 L7 31 Z" fill="#ecd583"/><path d="M8 1 H19.500 Q21 1 21 2.500 V14 L8 20 Z" fill="#f9ecb4" opacity=".8"/><path d="M.5 .8 L6.700 5 V31.200 L.5 23.500 Z" fill="#fcf0bc" stroke="#d8b95e" stroke-width=".8"/><path d="M6.700 5 V31.200 L9 30.500 V6 Z" fill="#cfb056" opacity=".7"/></svg>
<svg style="left:364px;top:183px;" width="17" height="15" viewBox="0 0 17 15"><path d="M16.500 4.500 H8.500 V.8 L.8 7.500 L8.500 14.200 V10.500 H16.500 Z" fill="#2f8fe0" stroke="#1a64b0" stroke-width=".9"/></svg>
<div class="t" style="left:304px;width:120px;text-align:center;top:201px;height:16px;line-height:16px;font-size:12px;color:#1e1e1e;letter-spacing:-0.46px">Move</div>
<div class="t" style="left:300px;width:120px;text-align:center;top:213.5px;height:16px;line-height:16px;font-size:12px;color:#1e1e1e;">to</div>
<svg style="left:368.5px;top:221px;" width="7" height="4" viewBox="0 0 7 4"><path d="M0 0 H7 L3.500 4 Z" fill="#222"/></svg>
<svg style="left:394px;top:167px;" width="22" height="32" viewBox="0 0 22 32"><path d="M6 1 H19.500 Q21 1 21 2.500 V27 L7 31 Z" fill="#ecd583"/><path d="M8 1 H19.500 Q21 1 21 2.500 V14 L8 20 Z" fill="#f9ecb4" opacity=".8"/><path d="M.5 .8 L6.700 5 V31.200 L.5 23.500 Z" fill="#fcf0bc" stroke="#d8b95e" stroke-width=".8"/><path d="M6.700 5 V31.200 L9 30.500 V6 Z" fill="#cfb056" opacity=".7"/></svg>
<svg style="left:405px;top:166px;" width="21" height="24" viewBox="0 0 21 24"><path d="M.5 .5 H7 L10.500 4 V14.500 H.5 Z" fill="#fff" stroke="#9a9a9a"/><path d="M7.500 7.500 H15 L19.500 12 V23.500 H7.500 Z" fill="#fff" stroke="#9a9a9a"/><path d="M9.500 13 H16 M9.500 15.500 H17.500 M9.500 18 H17.500 M9.500 20.500 H17.500" stroke="#2f6fb5" stroke-width="1.100"/></svg>
<div class="t" style="left:346.5px;width:120px;text-align:center;top:201px;height:16px;line-height:16px;font-size:12px;color:#1e1e1e;letter-spacing:-0.50px">Copy</div>
<div class="t" style="left:342px;width:120px;text-align:center;top:213.5px;height:16px;line-height:16px;font-size:12px;color:#1e1e1e;">to</div>
<svg style="left:410.5px;top:221px;" width="7" height="4" viewBox="0 0 7 4"><path d="M0 0 H7 L3.500 4 Z" fill="#222"/></svg>
<div style="left:433px;top:170px;width:1px;height:56px;background:#e2e3e4"></div>
<svg style="left:440px;top:169px;" width="33" height="30" viewBox="0 0 33 30"><path d="M3 3 Q14 10 27 28 Q29 27 30 25 Q18 10 6 1 Z" fill="#d03a30"/><path d="M30 2 Q15 10 3 27 Q2 29 5 29 Q15 13 32 3 Z" fill="#e04a3c"/></svg>
<div class="t" style="left:396.3px;width:120px;text-align:center;top:201px;height:16px;line-height:16px;font-size:12px;color:#1e1e1e;letter-spacing:-0.45px">Delete</div>
<svg style="left:453px;top:221px;" width="7" height="4" viewBox="0 0 7 4"><path d="M0 0 H7 L3.500 4 Z" fill="#222"/></svg>
<svg style="left:485px;top:169px;" width="32" height="28" viewBox="0 0 32 28"><rect x="1" y="8" width="28" height="12" fill="#fff" stroke="#2f77c3" stroke-width="1.400"/><rect x="4" y="10.500" width="15" height="7" fill="#3b89d6"/><path d="M18 1.500 Q22 1.500 23 4 Q24 1.500 28 1.500 M23 4 V24 M18 26.500 Q22 26.500 23 24 Q24 26.500 28 26.500" fill="none" stroke="#777" stroke-width="1.800"/></svg>
<div class="t" style="left:440.7px;width:120px;text-align:center;top:201px;height:16px;line-height:16px;font-size:12px;color:#1e1e1e;letter-spacing:-0.81px">Rename</div>
<div class="t" style="left:373.7px;width:120px;text-align:center;top:234px;height:16px;line-height:16px;font-size:12px;color:#6d6d6d;letter-spacing:-0.34px">Organize</div>
<svg style="left:545px;top:167px;" width="22" height="32" viewBox="0 0 22 32"><path d="M6 1 H19.500 Q21 1 21 2.500 V27 L7 31 Z" fill="#ecd583"/><path d="M8 1 H19.500 Q21 1 21 2.500 V14 L8 20 Z" fill="#f9ecb4" opacity=".8"/><path d="M.5 .8 L6.700 5 V31.200 L.5 23.500 Z" fill="#fcf0bc" stroke="#d8b95e" stroke-width=".8"/><path d="M6.700 5 V31.200 L9 30.500 V6 Z" fill="#cfb056" opacity=".7"/></svg>
<div class="t" style="left:496px;width:120px;text-align:center;top:201px;height:16px;line-height:16px;font-size:12px;color:#1e1e1e;letter-spacing:-0.67px">New</div>
<div class="t" style="left:495.5px;width:120px;text-align:center;top:213.5px;height:16px;line-height:16px;font-size:12px;color:#1e1e1e;letter-spacing:0.16px">folder</div>
<svg style="left:580px;top:166px;" width="18" height="18" viewBox="0 0 18 18"><rect x=".5" y=".5" width="12" height="9" fill="#e8f1fb" stroke="#3f7fc0"/><rect x=".5" y=".5" width="12" height="2.500" fill="#3f7fc0"/><path d="M5.500 5.500 H17.500 V17.500 H5.500 Z" fill="#fff" stroke="#888"/><path d="M7.500 9 H15.500 M7.500 11.500 H15.500 M7.500 14 H15.500" stroke="#bbb"/></svg>
<div class="t" style="left:599.8px;top:166.5px;height:17px;line-height:17px;font-size:12px;color:#1e1e1e;letter-spacing:-0.38px">New item</div>
<svg style="left:650.5px;top:174px;" width="7" height="4" viewBox="0 0 7 4"><path d="M0 0 H7 L3.500 4 Z" fill="#222"/></svg>
<svg style="left:580px;top:188px;" width="18" height="17" viewBox="0 0 18 17"><path d="M4.500 3.500 H12 L16.500 8 V16.500 H4.500 Z" fill="#fff" stroke="#888"/><path d="M0 3 H9 M1 6 H8 M2 9 H7" stroke="#2a62ad" stroke-width="1.300"/></svg>
<div class="t" style="left:599.8px;top:188.5px;height:17px;line-height:17px;font-size:12px;color:#1e1e1e;letter-spacing:-1.03px">Easy access</div>
<svg style="left:659.5px;top:196px;" width="7" height="4" viewBox="0 0 7 4"><path d="M0 0 H7 L3.500 4 Z" fill="#222"/></svg>
<div class="t" style="left:542px;width:120px;text-align:center;top:234px;height:16px;line-height:16px;font-size:12px;color:#6d6d6d;letter-spacing:-0.67px">New</div>
<svg style="left:695px;top:168px;" width="30" height="32" viewBox="0 0 30 32"><path d="M.5 .5 H14 L20.500 7 V28.500 H.5 Z" fill="#fff" stroke="#9a9a9a"/><path d="M14 .5 V7 H20.500" fill="none" stroke="#9a9a9a"/><path d="M9 21 L14 28 L26 12" fill="none" stroke="#e0703c" stroke-width="3.600" stroke-linecap="round" stroke-linejoin="round"/></svg>
<div class="t" style="left:648px;width:120px;text-align:center;top:201px;height:16px;line-height:16px;font-size:12px;color:#1e1e1e;letter-spacing:-0.32px">Properties</div>
<svg style="left:704px;top:221px;" width="7" height="4" viewBox="0 0 7 4"><path d="M0 0 H7 L3.500 4 Z" fill="#222"/></svg>
<svg style="left:740px;top:168px;" width="17" height="14" viewBox="0 0 17 14"><rect x=".5" y=".5" width="16" height="13" fill="#fff" stroke="#555"/><rect x=".5" y=".5" width="16" height="2.500" fill="#555"/><rect x="2.500" y="5" width="6" height="6.500" fill="#2f8a6a"/><path d="M10 6 H14 M10 8.500 H14 M10 11 H14" stroke="#777"/></svg>
<div class="t" style="left:759.8px;top:166.5px;height:17px;line-height:17px;font-size:12px;color:#1e1e1e;letter-spacing:-0.34px">Open</div>
<svg style="left:792.5px;top:174px;" width="7" height="4" viewBox="0 0 7 4"><path d="M0 0 H7 L3.500 4 Z" fill="#222"/></svg>
<svg style="left:742px;top:189px;" width="15" height="16" viewBox="0 0 15 16"><path d="M.5 .5 H8 L11.500 4 V15.500 H.5 Z" fill="#eef3fa" stroke="#98a6bd"/><path d="M4 12 L12 3 L14 5 L6 14 L3.500 14.500 Z" fill="#d5deec" stroke="#8596b3" stroke-width=".8"/></svg>
<div class="t" style="left:759.8px;top:188.5px;height:17px;line-height:17px;font-size:12px;color:#a0a0a0;letter-spacing:-0.42px">Edit</div>
<svg style="left:740px;top:211px;" width="18" height="17" viewBox="0 0 18 17"><path d="M.5 1 H6 L7.500 3 H11 V10 H.5 Z" fill="#e9cf6c" stroke="#c9a43c" stroke-width=".7"/><circle cx="11" cy="10.500" r="5.500" fill="#fff" stroke="#666"/><path d="M11 7 V10.500 H14" stroke="#444" fill="none"/><path d="M1 9 L5 13.500 L5.500 10.500 Q8 9.500 9 12" fill="none" stroke="#2e9b3e" stroke-width="1.900"/></svg>
<div class="t" style="left:759.8px;top:210.5px;height:17px;line-height:17px;font-size:12px;color:#1e1e1e;letter-spacing:-0.33px">History</div>
<div class="t" style="left:680.8px;width:120px;text-align:center;top:234px;height:16px;line-height:16px;font-size:12px;color:#6d6d6d;letter-spacing:-0.41px">Open</div>
<svg style="left:816px;top:167px;" width="16" height="16" viewBox="0 0 16 16"><rect x="1" y="1" width="6" height="6" fill="#cfe4f8" stroke="#2f86d6" stroke-width="1.600"/><rect x="9" y="1" width="6" height="6" fill="#cfe4f8" stroke="#2f86d6" stroke-width="1.600"/><rect x="1" y="9" width="6" height="6" fill="#cfe4f8" stroke="#2f86d6" stroke-width="1.600"/><rect x="9" y="9" width="6" height="6" fill="#cfe4f8" stroke="#2f86d6" stroke-width="1.600"/></svg>
<div class="t" style="left:835.7px;top:166.5px;height:17px;line-height:17px;font-size:12px;color:#1e1e1e;letter-spacing:-0.47px">Select all</div>
<svg style="left:816px;top:189px;" width="16" height="16" viewBox="0 0 16 16"><rect x="2.5" y="2.5" width="3.5" height="3.5" fill="#fff" stroke="#888" stroke-width="1"/><rect x="10.0" y="2.5" width="3.5" height="3.5" fill="#fff" stroke="#888" stroke-width="1"/><rect x="2.5" y="10.0" width="3.5" height="3.5" fill="#fff" stroke="#888" stroke-width="1"/><rect x="10.0" y="10.0" width="3.5" height="3.5" fill="#fff" stroke="#888" stroke-width="1"/></svg>
<div class="t" style="left:835.7px;top:188.5px;height:17px;line-height:17px;font-size:12px;color:#1e1e1e;letter-spacing:-0.40px">Select none</div>
<svg style="left:816px;top:211px;" width="16" height="16" viewBox="0 0 16 16"><rect x="2.5" y="2.5" width="3.5" height="3.5" fill="#fff" stroke="#888" stroke-width="1"/><rect x="9" y="1" width="6" height="6" fill="#cfe4f8" stroke="#2f86d6" stroke-width="1.600"/><rect x="1" y="9" width="6" height="6" fill="#cfe4f8" stroke="#2f86d6" stroke-width="1.600"/><rect x="10.0" y="10.0" width="3.5" height="3.5" fill="#fff" stroke="#888" stroke-width="1"/></svg>
<div class="t" style="left:835.7px;top:210.5px;height:17px;line-height:17px;font-size:12px;color:#1e1e1e;letter-spacing:-0.23px">Invert selection</div>
<div class="t" style="left:805.5px;width:120px;text-align:center;top:234px;height:16px;line-height:16px;font-size:12px;color:#6d6d6d;letter-spacing:-0.73px">Select</div>
<div style="left:144px;top:253px;width:1251px;height:444px;background:#fff"></div>
<svg style="left:153px;top:260px;" width="21" height="21" viewBox="0 0 21 21"><circle cx="10.500" cy="10.500" r="9.300" fill="none" stroke="#555" stroke-width="1.300"/><path d="M16 10.500 H6 M10 6 L5.500 10.500 L10 15" fill="none" stroke="#555" stroke-width="1.600"/></svg>
<svg style="left:182px;top:260px;" width="21" height="21" viewBox="0 0 21 21"><circle cx="10.500" cy="10.500" r="9.300" fill="none" stroke="#c4c4c4" stroke-width="1.300"/><path d="M5 10.500 H15 M11 6 L15.500 10.500 L11 15" fill="none" stroke="#c4c4c4" stroke-width="1.600"/></svg>
<svg style="left:212px;top:269px;" width="7" height="4" viewBox="0 0 7 4"><path d="M0 0 H7 L3.500 4 Z" fill="#666"/></svg>
<svg style="left:232px;top:263px;" width="13" height="14" viewBox="0 0 13 14"><path d="M6.500 13 V2 M2 6 L6.500 1.500 L11 6" fill="none" stroke="#555" stroke-width="1.600"/></svg>
<div style="left:252px;top:259px;width:892px;height:22px;background:#fff;border:1px solid #d9d9d9"></div>
<svg style="left:256px;top:262px;" width="14" height="16" viewBox="0 0 14 16"><path d="M.3 .5 H11.500 V6 L13 6.500 V13.500 L11.500 14.200 L5 15.800 L.3 15 Z" fill="#f1d980"/><path d="M7 1 H11.500 V6 L13 6.500 V13.500 L11.500 14.200 L7 15.300 Z" fill="#ecd177"/><path d="M.3 .5 H5 V15.800 L.3 15 Z" fill="#f9e79e"/><path d="M5 .8 H7 V15.300 L5 15.800 Z" fill="#cdb05a"/><path d="M3.600 1.500 V7" stroke="#fffbe8" stroke-width=".8"/><rect x="11" y="8" width="1.200" height="5" fill="#f4f9fd"/><rect x="11" y="11" width="1.200" height="2.200" fill="#2f8fdc"/></svg>
<svg style="left:280px;top:266px;" width="5" height="8" viewBox="0 0 5 8"><path d="M0 0 L5 4 L0 8 Z" fill="#555"/></svg>
<div class="t" style="left:292.4px;top:261.5px;height:17px;line-height:17px;font-size:12px;color:#1e1e1e;letter-spacing:-0.14px">Michael Johnson</div>
<svg style="left:392px;top:266px;" width="5" height="8" viewBox="0 0 5 8"><path d="M0 0 L5 4 L0 8 Z" fill="#555"/></svg>
<div class="t" style="left:404.4px;top:261.5px;height:17px;line-height:17px;font-size:12px;color:#1e1e1e;letter-spacing:-0.05px">Dropbox</div>
<svg style="left:460px;top:266px;" width="5" height="8" viewBox="0 0 5 8"><path d="M0 0 L5 4 L0 8 Z" fill="#555"/></svg>
<div class="t" style="left:472px;top:261.5px;height:17px;line-height:17px;font-size:12px;color:#1e1e1e;letter-spacing:-0.09px">Guetterman</div>
<svg style="left:546px;top:266px;" width="5" height="8" viewBox="0 0 5 8"><path d="M0 0 L5 4 L0 8 Z" fill="#555"/></svg>
<div class="t" style="left:557.8px;top:261.5px;height:17px;line-height:17px;font-size:12px;color:#1e1e1e;letter-spacing:0.05px">tfiles</div>
<svg style="left:1129px;top:267px;" width="10" height="7" viewBox="0 0 10 7"><path d="M1 1 L5 5 L9 1" fill="none" stroke="#333" stroke-width="1.700"/></svg>
<div style="left:1143px;top:259px;width:25px;height:22px;background:#fff;border:1px solid #d9d9d9"></div>
<svg style="left:1149px;top:263px;" width="14" height="14" viewBox="0 0 14 14"><path d="M11 4.500 A4.800 4.800 0 1 0 12 8.500" fill="none" stroke="#444" stroke-width="1.400"/><path d="M8 1 L11.500 4.500 L8 6.500 Z" fill="#444"/></svg>
<div style="left:1181px;top:259px;width:202px;height:22px;background:#fff;border:1px solid #d9d9d9"></div>
<div class="t" style="left:1189px;top:261.5px;height:17px;line-height:17px;font-size:12px;color:#707070;letter-spacing:-0.16px">Search tfiles</div>
<svg style="left:1364px;top:264px;" width="12" height="12" viewBox="0 0 12 12"><circle cx="7.500" cy="4.500" r="3.200" fill="none" stroke="#555" stroke-width="1.600"/><path d="M5.300 6.700 L1.200 10.800" stroke="#555" stroke-width="2" stroke-linecap="round"/></svg>
<div style="left:517px;top:289px;width:17px;height:386px;background:#f0f0f0"></div>
<svg style="left:521px;top:295px;" width="9" height="6" viewBox="0 0 9 6"><path d="M1 5 L4.500 1.500 L8 5" fill="none" stroke="#222" stroke-width="1.700"/></svg>
<svg style="left:521px;top:662px;" width="9" height="6" viewBox="0 0 9 6"><path d="M1 1 L4.500 4.500 L8 1" fill="none" stroke="#222" stroke-width="1.700"/></svg>
<div style="left:145px;top:541px;width:371px;height:21px;background:#f6f6f6;border:1px solid #e3e3e3"></div>
<div style="left:144px;top:289px;width:372px;height:386px;overflow:hidden">
<svg style="left:51px;top:2px;" width="14" height="16" viewBox="0 0 14 16"><path d="M.3 .5 H11.500 V6 L13 6.500 V13.500 L11.500 14.200 L5 15.800 L.3 15 Z" fill="#f1d980"/><path d="M7 1 H11.500 V6 L13 6.500 V13.500 L11.500 14.200 L7 15.300 Z" fill="#ecd177"/><path d="M.3 .5 H5 V15.800 L.3 15 Z" fill="#f9e79e"/><path d="M5 .8 H7 V15.300 L5 15.800 Z" fill="#cdb05a"/><path d="M3.600 1.500 V7" stroke="#fffbe8" stroke-width=".8"/><rect x="11" y="8" width="1.200" height="5" fill="#f4f9fd"/><rect x="11" y="11" width="1.200" height="2.200" fill="#2f8fdc"/></svg>
<div class="t" style="left:71.19999999999999px;top:2.5px;height:17px;line-height:17px;font-size:12px;color:#1e1e1e;letter-spacing:0.25px">blog</div>
<svg style="left:51px;top:23px;" width="14" height="16" viewBox="0 0 14 16"><path d="M.3 .5 H11.500 V6 L13 6.500 V13.500 L11.500 14.200 L5 15.800 L.3 15 Z" fill="#f1d980"/><path d="M7 1 H11.500 V6 L13 6.500 V13.500 L11.500 14.200 L7 15.300 Z" fill="#ecd177"/><path d="M.3 .5 H5 V15.800 L.3 15 Z" fill="#f9e79e"/><path d="M5 .8 H7 V15.300 L5 15.800 Z" fill="#cdb05a"/><path d="M3.600 1.500 V7" stroke="#fffbe8" stroke-width=".8"/><rect x="11" y="8" width="1.200" height="5" fill="#f4f9fd"/><rect x="11" y="11" width="1.200" height="2.200" fill="#2f8fdc"/></svg>
<div class="t" style="left:71.19999999999999px;top:23.5px;height:17px;line-height:17px;font-size:12px;color:#1e1e1e;letter-spacing:-0.22px">Camera Uploads</div>
<svg style="left:51px;top:44px;" width="14" height="16" viewBox="0 0 14 16"><path d="M.3 .5 H11.500 V6 L13 6.500 V13.500 L11.500 14.200 L5 15.800 L.3 15 Z" fill="#f1d980"/><path d="M7 1 H11.500 V6 L13 6.500 V13.500 L11.500 14.200 L7 15.300 Z" fill="#ecd177"/><path d="M.3 .5 H5 V15.800 L.3 15 Z" fill="#f9e79e"/><path d="M5 .8 H7 V15.300 L5 15.800 Z" fill="#cdb05a"/><path d="M3.600 1.500 V7" stroke="#fffbe8" stroke-width=".8"/><rect x="11" y="8" width="1.200" height="5" fill="#f4f9fd"/><rect x="11" y="11" width="1.200" height="2.200" fill="#2f8fdc"/></svg>
<div class="t" style="left:71.19999999999999px;top:44.5px;height:17px;line-height:17px;font-size:12px;color:#1e1e1e;letter-spacing:-0.18px">CloudGazingImages</div>
<svg style="left:51px;top:65px;" width="14" height="16" viewBox="0 0 14 16"><path d="M.3 .5 H11.500 V6 L13 6.500 V13.500 L11.500 14.200 L5 15.800 L.3 15 Z" fill="#f1d980"/><path d="M7 1 H11.500 V6 L13 6.500 V13.500 L11.500 14.200 L7 15.300 Z" fill="#ecd177"/><path d="M.3 .5 H5 V15.800 L.3 15 Z" fill="#f9e79e"/><path d="M5 .8 H7 V15.300 L5 15.800 Z" fill="#cdb05a"/><path d="M3.600 1.500 V7" stroke="#fffbe8" stroke-width=".8"/><rect x="11" y="8" width="1.200" height="5" fill="#f4f9fd"/><rect x="11" y="11" width="1.200" height="2.200" fill="#2f8fdc"/></svg>
<div class="t" style="left:71.19999999999999px;top:65.5px;height:17px;line-height:17px;font-size:12px;color:#1e1e1e;letter-spacing:-0.10px">Code Craft - The Practice Of Writing Excellent Code</div>
<svg style="left:51px;top:86px;" width="14" height="16" viewBox="0 0 14 16"><path d="M.3 .5 H11.500 V6 L13 6.500 V13.500 L11.500 14.200 L5 15.800 L.3 15 Z" fill="#f1d980"/><path d="M7 1 H11.500 V6 L13 6.500 V13.500 L11.500 14.200 L7 15.300 Z" fill="#ecd177"/><path d="M.3 .5 H5 V15.800 L.3 15 Z" fill="#f9e79e"/><path d="M5 .8 H7 V15.300 L5 15.800 Z" fill="#cdb05a"/><path d="M3.600 1.500 V7" stroke="#fffbe8" stroke-width=".8"/><rect x="11" y="8" width="1.200" height="5" fill="#f4f9fd"/><rect x="11" y="11" width="1.200" height="2.200" fill="#2f8fdc"/></svg>
<div class="t" style="left:71.19999999999999px;top:86.5px;height:17px;line-height:17px;font-size:12px;color:#1e1e1e;">Cpp</div>
<svg style="left:51px;top:107px;" width="14" height="16" viewBox="0 0 14 16"><path d="M.3 .5 H11.500 V6 L13 6.500 V13.500 L11.500 14.200 L5 15.800 L.3 15 Z" fill="#f1d980"/><path d="M7 1 H11.500 V6 L13 6.500 V13.500 L11.500 14.200 L7 15.300 Z" fill="#ecd177"/><path d="M.3 .5 H5 V15.800 L.3 15 Z" fill="#f9e79e"/><path d="M5 .8 H7 V15.300 L5 15.800 Z" fill="#cdb05a"/><path d="M3.600 1.500 V7" stroke="#fffbe8" stroke-width=".8"/><rect x="11" y="8" width="1.200" height="5" fill="#f4f9fd"/><rect x="11" y="11" width="1.200" height="2.200" fill="#2f8fdc"/></svg>
<div class="t" style="left:71.19999999999999px;top:107.5px;height:17px;line-height:17px;font-size:12px;color:#1e1e1e;">Datacenter</div>
<svg style="left:51px;top:128px;" width="14" height="16" viewBox="0 0 14 16"><path d="M.3 .5 H11.500 V6 L13 6.500 V13.500 L11.500 14.200 L5 15.800 L.3 15 Z" fill="#f1d980"/><path d="M7 1 H11.500 V6 L13 6.500 V13.500 L11.500 14.200 L7 15.300 Z" fill="#ecd177"/><path d="M.3 .5 H5 V15.800 L.3 15 Z" fill="#f9e79e"/><path d="M5 .8 H7 V15.300 L5 15.800 Z" fill="#cdb05a"/><path d="M3.600 1.500 V7" stroke="#fffbe8" stroke-width=".8"/><rect x="11" y="8" width="1.200" height="5" fill="#f4f9fd"/><rect x="11" y="11" width="1.200" height="2.200" fill="#2f8fdc"/></svg>
<div class="t" style="left:71.19999999999999px;top:128.5px;height:17px;line-height:17px;font-size:12px;color:#1e1e1e;">Downloads</div>
<svg style="left:51px;top:149px;" width="14" height="16" viewBox="0 0 14 16"><path d="M.3 .5 H11.500 V6 L13 6.500 V13.500 L11.500 14.200 L5 15.800 L.3 15 Z" fill="#f1d980"/><path d="M7 1 H11.500 V6 L13 6.500 V13.500 L11.500 14.200 L7 15.300 Z" fill="#ecd177"/><path d="M.3 .5 H5 V15.800 L.3 15 Z" fill="#f9e79e"/><path d="M5 .8 H7 V15.300 L5 15.800 Z" fill="#cdb05a"/><path d="M3.600 1.500 V7" stroke="#fffbe8" stroke-width=".8"/><rect x="11" y="8" width="1.200" height="5" fill="#f4f9fd"/><rect x="11" y="11" width="1.200" height="2.200" fill="#2f8fdc"/></svg>
<div class="t" style="left:71.19999999999999px;top:149.5px;height:17px;line-height:17px;font-size:12px;color:#1e1e1e;">eBooks</div>
<svg style="left:51px;top:170px;" width="14" height="16" viewBox="0 0 14 16"><path d="M.3 .5 H11.500 V6 L13 6.500 V13.500 L11.500 14.200 L5 15.800 L.3 15 Z" fill="#f1d980"/><path d="M7 1 H11.500 V6 L13 6.500 V13.500 L11.500 14.200 L7 15.300 Z" fill="#ecd177"/><path d="M.3 .5 H5 V15.800 L.3 15 Z" fill="#f9e79e"/><path d="M5 .8 H7 V15.300 L5 15.800 Z" fill="#cdb05a"/><path d="M3.600 1.500 V7" stroke="#fffbe8" stroke-width=".8"/><rect x="11" y="8" width="1.200" height="5" fill="#f4f9fd"/><rect x="11" y="11" width="1.200" height="2.200" fill="#2f8fdc"/></svg>
<div class="t" style="left:71.19999999999999px;top:170.5px;height:17px;line-height:17px;font-size:12px;color:#1e1e1e;">Guetterman</div>
<svg style="left:61px;top:191px;" width="14" height="16" viewBox="0 0 14 16"><path d="M.3 .5 H11.500 V6 L13 6.500 V13.500 L11.500 14.200 L5 15.800 L.3 15 Z" fill="#f1d980"/><path d="M7 1 H11.500 V6 L13 6.500 V13.500 L11.500 14.200 L7 15.300 Z" fill="#ecd177"/><path d="M.3 .5 H5 V15.800 L.3 15 Z" fill="#f9e79e"/><path d="M5 .8 H7 V15.300 L5 15.800 Z" fill="#cdb05a"/><path d="M3.600 1.500 V7" stroke="#fffbe8" stroke-width=".8"/><rect x="11" y="8" width="1.200" height="5" fill="#f4f9fd"/><rect x="11" y="11" width="1.200" height="2.200" fill="#2f8fdc"/></svg>
<div class="t" style="left:81.19999999999999px;top:191.5px;height:17px;line-height:17px;font-size:12px;color:#1e1e1e;">Archive</div>
<svg style="left:61px;top:212px;" width="14" height="16" viewBox="0 0 14 16"><path d="M.3 .5 H11.500 V6 L13 6.500 V13.500 L11.500 14.200 L5 15.800 L.3 15 Z" fill="#f1d980"/><path d="M7 1 H11.500 V6 L13 6.500 V13.500 L11.500 14.200 L7 15.300 Z" fill="#ecd177"/><path d="M.3 .5 H5 V15.800 L.3 15 Z" fill="#f9e79e"/><path d="M5 .8 H7 V15.300 L5 15.800 Z" fill="#cdb05a"/><path d="M3.600 1.500 V7" stroke="#fffbe8" stroke-width=".8"/><rect x="11" y="8" width="1.200" height="5" fill="#f4f9fd"/><rect x="11" y="11" width="1.200" height="2.200" fill="#2f8fdc"/></svg>
<div class="t" style="left:81.19999999999999px;top:212.5px;height:17px;line-height:17px;font-size:12px;color:#1e1e1e;">Reports</div>
<svg style="left:61px;top:233px;" width="14" height="16" viewBox="0 0 14 16"><path d="M.3 .5 H11.500 V6 L13 6.500 V13.500 L11.500 14.200 L5 15.800 L.3 15 Z" fill="#f1d980"/><path d="M7 1 H11.500 V6 L13 6.500 V13.500 L11.500 14.200 L7 15.300 Z" fill="#ecd177"/><path d="M.3 .5 H5 V15.800 L.3 15 Z" fill="#f9e79e"/><path d="M5 .8 H7 V15.300 L5 15.800 Z" fill="#cdb05a"/><path d="M3.600 1.500 V7" stroke="#fffbe8" stroke-width=".8"/><rect x="11" y="8" width="1.200" height="5" fill="#f4f9fd"/><rect x="11" y="11" width="1.200" height="2.200" fill="#2f8fdc"/></svg>
<div class="t" style="left:81.19999999999999px;top:233.5px;height:17px;line-height:17px;font-size:12px;color:#1e1e1e;letter-spacing:-0.82px">STOCK</div>
<svg style="left:61px;top:254px;" width="14" height="16" viewBox="0 0 14 16"><path d="M.3 .5 H11.500 V6 L13 6.500 V13.500 L11.500 14.200 L5 15.800 L.3 15 Z" fill="#f1d980"/><path d="M7 1 H11.500 V6 L13 6.500 V13.500 L11.500 14.200 L7 15.300 Z" fill="#ecd177"/><path d="M.3 .5 H5 V15.800 L.3 15 Z" fill="#f9e79e"/><path d="M5 .8 H7 V15.300 L5 15.800 Z" fill="#cdb05a"/><path d="M3.600 1.500 V7" stroke="#fffbe8" stroke-width=".8"/><rect x="11" y="8" width="1.200" height="5" fill="#f4f9fd"/><rect x="11" y="11" width="1.200" height="2.200" fill="#2f8fdc"/></svg>
<div class="t" style="left:81.19999999999999px;top:254.5px;height:17px;line-height:17px;font-size:12px;color:#1e1e1e;letter-spacing:0.05px">tfiles</div>
<svg style="left:61px;top:275px;" width="14" height="16" viewBox="0 0 14 16"><path d="M.3 .5 H11.500 V6 L13 6.500 V13.500 L11.500 14.200 L5 15.800 L.3 15 Z" fill="#f1d980"/><path d="M7 1 H11.500 V6 L13 6.500 V13.500 L11.500 14.200 L7 15.300 Z" fill="#ecd177"/><path d="M.3 .5 H5 V15.800 L.3 15 Z" fill="#f9e79e"/><path d="M5 .8 H7 V15.300 L5 15.800 Z" fill="#cdb05a"/><path d="M3.600 1.500 V7" stroke="#fffbe8" stroke-width=".8"/><rect x="11" y="8" width="1.200" height="5" fill="#f4f9fd"/><rect x="11" y="11" width="1.200" height="2.200" fill="#2f8fdc"/></svg>
<div class="t" style="left:81.19999999999999px;top:275.5px;height:17px;line-height:17px;font-size:12px;color:#1e1e1e;letter-spacing:-0.16px">VersionTracker</div>
<svg style="left:51px;top:296px;" width="14" height="16" viewBox="0 0 14 16"><path d="M.3 .5 H11.500 V6 L13 6.500 V13.500 L11.500 14.200 L5 15.800 L.3 15 Z" fill="#f1d980"/><path d="M7 1 H11.500 V6 L13 6.500 V13.500 L11.500 14.200 L7 15.300 Z" fill="#ecd177"/><path d="M.3 .5 H5 V15.800 L.3 15 Z" fill="#f9e79e"/><path d="M5 .8 H7 V15.300 L5 15.800 Z" fill="#cdb05a"/><path d="M3.600 1.500 V7" stroke="#fffbe8" stroke-width=".8"/><rect x="11" y="8" width="1.200" height="5" fill="#f4f9fd"/><rect x="11" y="11" width="1.200" height="2.200" fill="#2f8fdc"/></svg>
<div class="t" style="left:71.19999999999999px;top:296.5px;height:17px;line-height:17px;font-size:12px;color:#1e1e1e;letter-spacing:-0.73px">HL2Saves</div>
<svg style="left:51px;top:317px;" width="14" height="16" viewBox="0 0 14 16"><path d="M.3 .5 H11.500 V6 L13 6.500 V13.500 L11.500 14.200 L5 15.800 L.3 15 Z" fill="#f1d980"/><path d="M7 1 H11.500 V6 L13 6.500 V13.500 L11.500 14.200 L7 15.300 Z" fill="#ecd177"/><path d="M.3 .5 H5 V15.800 L.3 15 Z" fill="#f9e79e"/><path d="M5 .8 H7 V15.300 L5 15.800 Z" fill="#cdb05a"/><path d="M3.600 1.500 V7" stroke="#fffbe8" stroke-width=".8"/><rect x="11" y="8" width="1.200" height="5" fill="#f4f9fd"/><rect x="11" y="11" width="1.200" height="2.200" fill="#2f8fdc"/></svg>
<div class="t" style="left:71.19999999999999px;top:317.5px;height:17px;line-height:17px;font-size:12px;color:#1e1e1e;letter-spacing:-0.63px">IFTTT</div>
<svg style="left:51px;top:338px;" width="14" height="16" viewBox="0 0 14 16"><path d="M.3 .5 H11.500 V6 L13 6.500 V13.500 L11.500 14.200 L5 15.800 L.3 15 Z" fill="#f1d980"/><path d="M7 1 H11.500 V6 L13 6.500 V13.500 L11.500 14.200 L7 15.300 Z" fill="#ecd177"/><path d="M.3 .5 H5 V15.800 L.3 15 Z" fill="#f9e79e"/><path d="M5 .8 H7 V15.300 L5 15.800 Z" fill="#cdb05a"/><path d="M3.600 1.500 V7" stroke="#fffbe8" stroke-width=".8"/><rect x="11" y="8" width="1.200" height="5" fill="#f4f9fd"/><rect x="11" y="11" width="1.200" height="2.200" fill="#2f8fdc"/></svg>
<div class="t" style="left:71.19999999999999px;top:338.5px;height:17px;line-height:17px;font-size:12px;color:#1e1e1e;letter-spacing:-0.15px">jQueryFundamentals_files</div>
<svg style="left:51px;top:359px;" width="14" height="16" viewBox="0 0 14 16"><path d="M.3 .5 H11.500 V6 L13 6.500 V13.500 L11.500 14.200 L5 15.800 L.3 15 Z" fill="#f1d980"/><path d="M7 1 H11.500 V6 L13 6.500 V13.500 L11.500 14.200 L7 15.300 Z" fill="#ecd177"/><path d="M.3 .5 H5 V15.800 L.3 15 Z" fill="#f9e79e"/><path d="M5 .8 H7 V15.300 L5 15.800 Z" fill="#cdb05a"/><path d="M3.600 1.500 V7" stroke="#fffbe8" stroke-width=".8"/><rect x="11" y="8" width="1.200" height="5" fill="#f4f9fd"/><rect x="11" y="11" width="1.200" height="2.200" fill="#2f8fdc"/></svg>
<div class="t" style="left:71.19999999999999px;top:359.5px;height:17px;line-height:17px;font-size:12px;color:#1e1e1e;letter-spacing:-0.17px">jsbackup</div>
<svg style="left:51px;top:380px;" width="14" height="16" viewBox="0 0 14 16"><path d="M.3 .5 H11.500 V6 L13 6.500 V13.500 L11.500 14.200 L5 15.800 L.3 15 Z" fill="#f1d980"/><path d="M7 1 H11.500 V6 L13 6.500 V13.500 L11.500 14.200 L7 15.300 Z" fill="#ecd177"/><path d="M.3 .5 H5 V15.800 L.3 15 Z" fill="#f9e79e"/><path d="M5 .8 H7 V15.300 L5 15.800 Z" fill="#cdb05a"/><path d="M3.600 1.500 V7" stroke="#fffbe8" stroke-width=".8"/><rect x="11" y="8" width="1.200" height="5" fill="#f4f9fd"/><rect x="11" y="11" width="1.200" height="2.200" fill="#2f8fdc"/></svg>
<div class="t" style="left:71.19999999999999px;top:380.5px;height:17px;line-height:17px;font-size:12px;color:#1e1e1e;">Manga Tools</div>
<svg style="left:57px;top:30px;" width="8" height="9" viewBox="0 0 8 9"><rect x=".5" y=".5" width="7" height="8" fill="#c9c9c9" stroke="#9a9a9a"/><rect x="1.800" y="2.500" width="4.400" height="4" rx="1" fill="#4f87b8" stroke="#555" stroke-width=".8"/></svg>
</div>
<div style="left:537px;top:289px;width:564px;height:24px;background:#fff"></div>
<div class="t" style="left:553px;top:294.0px;height:17px;line-height:17px;font-size:12px;color:#4c607a;">Name</div>
<div class="t" style="left:814px;top:294.0px;height:17px;line-height:17px;font-size:12px;color:#4c607a;letter-spacing:0.05px">Date modified</div>
<div class="t" style="left:934px;top:294.0px;height:17px;line-height:17px;font-size:12px;color:#4c607a;">Type</div>
<div class="t" style="left:1054px;top:294.0px;height:17px;line-height:17px;font-size:12px;color:#4c607a;letter-spacing:-0.84px">Size</div>
<div style="left:807px;top:289px;width:1px;height:24px;background:#e5e5e5"></div>
<div style="left:927px;top:289px;width:1px;height:24px;background:#e5e5e5"></div>
<div style="left:1047px;top:289px;width:1px;height:24px;background:#e5e5e5"></div>
<svg style="left:672px;top:290px;" width="9" height="5" viewBox="0 0 9 5"><path d="M0 5 L4.500 .5 L9 5 Z" fill="#5b8fc2"/></svg>
<div style="left:1102px;top:289px;width:16px;height:368px;background:#f0f0f0"></div>
<svg style="left:1105px;top:295px;" width="9" height="6" viewBox="0 0 9 6"><path d="M1 5 L4.500 1.500 L8 5" fill="none" stroke="#222" stroke-width="1.700"/></svg>
<svg style="left:1105px;top:645px;" width="9" height="6" viewBox="0 0 9 6"><path d="M1 1 L4.500 4.500 L8 1" fill="none" stroke="#222" stroke-width="1.700"/></svg>
<div style="left:537px;top:315px;width:564px;height:342px;overflow:hidden">
<svg style="left:19px;top:-14px;" width="13" height="16" viewBox="0 0 13 16"><path d="M.5 .5 H9 L12.500 4 V15.500 H.5 Z" fill="#fdfdfd" stroke="#8a8a8a" stroke-width="1"/><path d="M9 .5 V4 H12.500" fill="none" stroke="#8a8a8a" stroke-width="1"/></svg>
<div class="t" style="left:37.200000000000045px;top:-13.5px;height:17px;line-height:17px;font-size:12px;color:#000;letter-spacing:-1.29px">GRBOX.T</div>
<div class="t" style="left:277px;top:-13.5px;height:17px;line-height:17px;font-size:12px;color:#4a4a4a;letter-spacing:-0.36px">1997-07-30 8:12 PM</div>
<div class="t" style="left:397px;top:-13.5px;height:17px;line-height:17px;font-size:12px;color:#4a4a4a;letter-spacing:-0.30px">T File</div>
<div class="t" style="left:560px;top:-13.5px;height:17px;line-height:17px;font-size:12px;color:#4a4a4a;">6 KB</div>
<svg style="left:19px;top:7px;" width="13" height="16" viewBox="0 0 13 16"><path d="M.5 .5 H9 L12.500 4 V15.500 H.5 Z" fill="#fdfdfd" stroke="#8a8a8a" stroke-width="1"/><path d="M9 .5 V4 H12.500" fill="none" stroke="#8a8a8a" stroke-width="1"/></svg>
<div class="t" style="left:37.200000000000045px;top:7.5px;height:17px;line-height:17px;font-size:12px;color:#000;letter-spacing:-0.96px">GRBOX2.T</div>
<div class="t" style="left:277px;top:7.5px;height:17px;line-height:17px;font-size:12px;color:#4a4a4a;letter-spacing:-0.36px">1997-07-31 7:10 PM</div>
<div class="t" style="left:397px;top:7.5px;height:17px;line-height:17px;font-size:12px;color:#4a4a4a;letter-spacing:-0.30px">T File</div>
<div class="t" style="left:560px;top:7.5px;height:17px;line-height:17px;font-size:12px;color:#4a4a4a;">7 KB</div>
<svg style="left:19px;top:28px;" width="13" height="16" viewBox="0 0 13 16"><path d="M.5 .5 H9 L12.500 4 V15.500 H.5 Z" fill="#fdfdfd" stroke="#8a8a8a" stroke-width="1"/><path d="M9 .5 V4 H12.500" fill="none" stroke="#8a8a8a" stroke-width="1"/></svg>
<div class="t" style="left:37.200000000000045px;top:28.5px;height:17px;line-height:17px;font-size:12px;color:#000;letter-spacing:-0.85px">GROWBOX.T</div>
<div class="t" style="left:277px;top:28.5px;height:17px;line-height:17px;font-size:12px;color:#4a4a4a;letter-spacing:-0.36px">1997-08-03 7:09 PM</div>
<div class="t" style="left:397px;top:28.5px;height:17px;line-height:17px;font-size:12px;color:#4a4a4a;letter-spacing:-0.30px">T File</div>
<div class="t" style="left:560px;top:28.5px;height:17px;line-height:17px;font-size:12px;color:#4a4a4a;">5 KB</div>
<svg style="left:19px;top:49px;" width="13" height="16" viewBox="0 0 13 16"><path d="M.5 .5 H9 L12.500 4 V15.500 H.5 Z" fill="#fdfdfd" stroke="#8a8a8a" stroke-width="1"/><path d="M9 .5 V4 H12.500" fill="none" stroke="#8a8a8a" stroke-width="1"/></svg>
<div class="t" style="left:37.200000000000045px;top:49.5px;height:17px;line-height:17px;font-size:12px;color:#000;letter-spacing:-0.97px">GRTEST.T</div>
<div class="t" style="left:277px;top:49.5px;height:17px;line-height:17px;font-size:12px;color:#4a4a4a;letter-spacing:-0.36px">1997-08-03 7:30 PM</div>
<div class="t" style="left:397px;top:49.5px;height:17px;line-height:17px;font-size:12px;color:#4a4a4a;letter-spacing:-0.30px">T File</div>
<div class="t" style="left:560px;top:49.5px;height:17px;line-height:17px;font-size:12px;color:#4a4a4a;">2 KB</div>
<svg style="left:19px;top:70px;" width="13" height="16" viewBox="0 0 13 16"><path d="M.5 .5 H9 L12.500 4 V15.500 H.5 Z" fill="#fdfdfd" stroke="#8a8a8a" stroke-width="1"/><path d="M9 .5 V4 H12.500" fill="none" stroke="#8a8a8a" stroke-width="1"/></svg>
<div class="t" style="left:37.200000000000045px;top:70.5px;height:17px;line-height:17px;font-size:12px;color:#000;">HANOI.T</div>
<div class="t" style="left:277px;top:70.5px;height:17px;line-height:17px;font-size:12px;color:#4a4a4a;letter-spacing:-0.36px">1996-08-24 7:21 PM</div>
<div class="t" style="left:397px;top:70.5px;height:17px;line-height:17px;font-size:12px;color:#4a4a4a;letter-spacing:-0.30px">T File</div>
<div class="t" style="left:560px;top:70.5px;height:17px;line-height:17px;font-size:12px;color:#4a4a4a;">1 KB</div>
<svg style="left:19px;top:91px;" width="13" height="16" viewBox="0 0 13 16"><path d="M.5 .5 H9 L12.500 4 V15.500 H.5 Z" fill="#fdfdfd" stroke="#8a8a8a" stroke-width="1"/><path d="M9 .5 V4 H12.500" fill="none" stroke="#8a8a8a" stroke-width="1"/></svg>
<div class="t" style="left:37.200000000000045px;top:91.5px;height:17px;line-height:17px;font-size:12px;color:#000;">HELLO.T</div>
<div class="t" style="left:277px;top:91.5px;height:17px;line-height:17px;font-size:12px;color:#4a4a4a;letter-spacing:-0.36px">1996-08-24 7:21 PM</div>
<div class="t" style="left:397px;top:91.5px;height:17px;line-height:17px;font-size:12px;color:#4a4a4a;letter-spacing:-0.30px">T File</div>
<div class="t" style="left:560px;top:91.5px;height:17px;line-height:17px;font-size:12px;color:#4a4a4a;">1 KB</div>
<svg style="left:19px;top:112px;" width="13" height="16" viewBox="0 0 13 16"><path d="M.5 .5 H9 L12.500 4 V15.500 H.5 Z" fill="#fdfdfd" stroke="#8a8a8a" stroke-width="1"/><path d="M9 .5 V4 H12.500" fill="none" stroke="#8a8a8a" stroke-width="1"/></svg>
<div class="t" style="left:37.200000000000045px;top:112.5px;height:17px;line-height:17px;font-size:12px;color:#000;">INVADER.T</div>
<div class="t" style="left:277px;top:112.5px;height:17px;line-height:17px;font-size:12px;color:#4a4a4a;letter-spacing:-0.32px">1997-07-06 5:26 AM</div>
<div class="t" style="left:397px;top:112.5px;height:17px;line-height:17px;font-size:12px;color:#4a4a4a;letter-spacing:-0.30px">T File</div>
<div class="t" style="left:560px;top:112.5px;height:17px;line-height:17px;font-size:12px;color:#4a4a4a;">3 KB</div>
<svg style="left:19px;top:133px;" width="13" height="16" viewBox="0 0 13 16"><path d="M.5 .5 H9 L12.500 4 V15.500 H.5 Z" fill="#fdfdfd" stroke="#8a8a8a" stroke-width="1"/><path d="M9 .5 V4 H12.500" fill="none" stroke="#8a8a8a" stroke-width="1"/></svg>
<div class="t" style="left:37.200000000000045px;top:133.5px;height:17px;line-height:17px;font-size:12px;color:#000;">KEYBOARD.DAT</div>
<div class="t" style="left:277px;top:133.5px;height:17px;line-height:17px;font-size:12px;color:#4a4a4a;letter-spacing:-0.32px">1997-07-06 5:26 AM</div>
<div class="t" style="left:397px;top:133.5px;height:17px;line-height:17px;font-size:12px;color:#4a4a4a;">DAT File</div>
<div class="t" style="left:560px;top:133.5px;height:17px;line-height:17px;font-size:12px;color:#4a4a4a;">1 KB</div>
<div style="left:0px;top:153px;width:564px;height:21px;background:#cce8ff;border:1px solid #99d1ff"></div>
<svg style="left:19px;top:154px;" width="13" height="16" viewBox="0 0 13 16"><path d="M.5 .5 H9 L12.500 4 V15.500 H.5 Z" fill="#fdfdfd" stroke="#8a8a8a" stroke-width="1"/><path d="M9 .5 V4 H12.500" fill="none" stroke="#8a8a8a" stroke-width="1"/></svg>
<div class="t" style="left:37.200000000000045px;top:154.5px;height:17px;line-height:17px;font-size:12px;color:#000;">KEYBOARD.EXE</div>
<div class="t" style="left:277px;top:154.5px;height:17px;line-height:17px;font-size:12px;color:#4a4a4a;letter-spacing:-0.32px">1997-07-06 5:26 AM</div>
<div class="t" style="left:397px;top:154.5px;height:17px;line-height:17px;font-size:12px;color:#4a4a4a;">Application</div>
<div class="t" style="left:560px;top:154.5px;height:17px;line-height:17px;font-size:12px;color:#4a4a4a;">141 KB</div>
<svg style="left:19px;top:175px;" width="13" height="16" viewBox="0 0 13 16"><path d="M.5 .5 H9 L12.500 4 V15.500 H.5 Z" fill="#fdfdfd" stroke="#8a8a8a" stroke-width="1"/><path d="M9 .5 V4 H12.500" fill="none" stroke="#8a8a8a" stroke-width="1"/></svg>
<div class="t" style="left:37.200000000000045px;top:175.5px;height:17px;line-height:17px;font-size:12px;color:#000;">KEYBOARD.T</div>
<div class="t" style="left:277px;top:175.5px;height:17px;line-height:17px;font-size:12px;color:#4a4a4a;letter-spacing:-0.32px">1997-07-06 5:26 AM</div>
<div class="t" style="left:397px;top:175.5px;height:17px;line-height:17px;font-size:12px;color:#4a4a4a;letter-spacing:-0.30px">T File</div>
<div class="t" style="left:560px;top:175.5px;height:17px;line-height:17px;font-size:12px;color:#4a4a4a;">4 KB</div>
<svg style="left:19px;top:196px;" width="13" height="16" viewBox="0 0 13 16"><path d="M.5 .5 H9 L12.500 4 V15.500 H.5 Z" fill="#fdfdfd" stroke="#8a8a8a" stroke-width="1"/><path d="M9 .5 V4 H12.500" fill="none" stroke="#8a8a8a" stroke-width="1"/></svg>
<div class="t" style="left:37.200000000000045px;top:196.5px;height:17px;line-height:17px;font-size:12px;color:#000;">LIFE.T</div>
<div class="t" style="left:277px;top:196.5px;height:17px;line-height:17px;font-size:12px;color:#4a4a4a;letter-spacing:-0.32px">1997-07-06 5:26 AM</div>
<div class="t" style="left:397px;top:196.5px;height:17px;line-height:17px;font-size:12px;color:#4a4a4a;letter-spacing:-0.30px">T File</div>
<div class="t" style="left:560px;top:196.5px;height:17px;line-height:17px;font-size:12px;color:#4a4a4a;">2 KB</div>
<svg style="left:19px;top:217px;" width="13" height="16" viewBox="0 0 13 16"><path d="M.5 .5 H9 L12.500 4 V15.500 H.5 Z" fill="#fdfdfd" stroke="#8a8a8a" stroke-width="1"/><path d="M9 .5 V4 H12.500" fill="none" stroke="#8a8a8a" stroke-width="1"/></svg>
<div class="t" style="left:37.200000000000045px;top:217.5px;height:17px;line-height:17px;font-size:12px;color:#000;letter-spacing:-0.81px">LSONG.T</div>
<div class="t" style="left:277px;top:217.5px;height:17px;line-height:17px;font-size:12px;color:#4a4a4a;letter-spacing:-0.32px">1997-07-06 5:26 AM</div>
<div class="t" style="left:397px;top:217.5px;height:17px;line-height:17px;font-size:12px;color:#4a4a4a;letter-spacing:-0.30px">T File</div>
<div class="t" style="left:560px;top:217.5px;height:17px;line-height:17px;font-size:12px;color:#4a4a4a;">1 KB</div>
<svg style="left:19px;top:238px;" width="13" height="16" viewBox="0 0 13 16"><path d="M.5 .5 H9 L12.500 4 V15.500 H.5 Z" fill="#fdfdfd" stroke="#8a8a8a" stroke-width="1"/><path d="M9 .5 V4 H12.500" fill="none" stroke="#8a8a8a" stroke-width="1"/></svg>
<div class="t" style="left:37.200000000000045px;top:238.5px;height:17px;line-height:17px;font-size:12px;color:#000;letter-spacing:-0.69px">LTEST.T</div>
<div class="t" style="left:277px;top:238.5px;height:17px;line-height:17px;font-size:12px;color:#4a4a4a;letter-spacing:-0.36px">1996-08-24 7:21 PM</div>
<div class="t" style="left:397px;top:238.5px;height:17px;line-height:17px;font-size:12px;color:#4a4a4a;letter-spacing:-0.30px">T File</div>
<div class="t" style="left:560px;top:238.5px;height:17px;line-height:17px;font-size:12px;color:#4a4a4a;">2 KB</div>
<svg style="left:19px;top:259px;" width="13" height="16" viewBox="0 0 13 16"><path d="M.5 .5 H9 L12.500 4 V15.500 H.5 Z" fill="#fdfdfd" stroke="#8a8a8a" stroke-width="1"/><path d="M9 .5 V4 H12.500" fill="none" stroke="#8a8a8a" stroke-width="1"/></svg>
<div class="t" style="left:37.200000000000045px;top:259.5px;height:17px;line-height:17px;font-size:12px;color:#000;letter-spacing:-0.45px">MAIRY.SNG</div>
<div class="t" style="left:277px;top:259.5px;height:17px;line-height:17px;font-size:12px;color:#4a4a4a;letter-spacing:-0.36px">1996-06-26 6:25 PM</div>
<div class="t" style="left:397px;top:259.5px;height:17px;line-height:17px;font-size:12px;color:#4a4a4a;letter-spacing:-0.59px">SNG File</div>
<div class="t" style="left:560px;top:259.5px;height:17px;line-height:17px;font-size:12px;color:#4a4a4a;">1 KB</div>
<svg style="left:19px;top:280px;" width="13" height="16" viewBox="0 0 13 16"><path d="M.5 .5 H9 L12.500 4 V15.500 H.5 Z" fill="#fdfdfd" stroke="#8a8a8a" stroke-width="1"/><path d="M9 .5 V4 H12.500" fill="none" stroke="#8a8a8a" stroke-width="1"/></svg>
<div class="t" style="left:37.200000000000045px;top:280.5px;height:17px;line-height:17px;font-size:12px;color:#000;letter-spacing:-0.64px">MARY2.SNG</div>
<div class="t" style="left:277px;top:280.5px;height:17px;line-height:17px;font-size:12px;color:#4a4a4a;letter-spacing:-0.36px">1996-06-26 6:48 PM</div>
<div class="t" style="left:397px;top:280.5px;height:17px;line-height:17px;font-size:12px;color:#4a4a4a;letter-spacing:-0.59px">SNG File</div>
<div class="t" style="left:560px;top:280.5px;height:17px;line-height:17px;font-size:12px;color:#4a4a4a;">1 KB</div>
<svg style="left:19px;top:301px;" width="13" height="16" viewBox="0 0 13 16"><path d="M.5 .5 H9 L12.500 4 V15.500 H.5 Z" fill="#fdfdfd" stroke="#8a8a8a" stroke-width="1"/><path d="M9 .5 V4 H12.500" fill="none" stroke="#8a8a8a" stroke-width="1"/></svg>
<div class="t" style="left:37.200000000000045px;top:301.5px;height:17px;line-height:17px;font-size:12px;color:#000;letter-spacing:-0.64px">MARY3.SNG</div>
<div class="t" style="left:277px;top:301.5px;height:17px;line-height:17px;font-size:12px;color:#4a4a4a;letter-spacing:-0.36px">1996-06-26 7:53 PM</div>
<div class="t" style="left:397px;top:301.5px;height:17px;line-height:17px;font-size:12px;color:#4a4a4a;letter-spacing:-0.59px">SNG File</div>
<div class="t" style="left:560px;top:301.5px;height:17px;line-height:17px;font-size:12px;color:#4a4a4a;">1 KB</div>
<svg style="left:19px;top:322px;" width="13" height="16" viewBox="0 0 13 16"><path d="M.5 .5 H9 L12.500 4 V15.500 H.5 Z" fill="#fdfdfd" stroke="#8a8a8a" stroke-width="1"/><path d="M9 .5 V4 H12.500" fill="none" stroke="#8a8a8a" stroke-width="1"/></svg>
<div class="t" style="left:37.200000000000045px;top:322.5px;height:17px;line-height:17px;font-size:12px;color:#000;letter-spacing:-0.46px">MBTD.SGM</div>
<div class="t" style="left:277px;top:322.5px;height:17px;line-height:17px;font-size:12px;color:#4a4a4a;letter-spacing:-0.36px">1996-08-24 9:08 PM</div>
<div class="t" style="left:397px;top:322.5px;height:17px;line-height:17px;font-size:12px;color:#4a4a4a;letter-spacing:-0.50px">SGM File</div>
<div class="t" style="left:560px;top:322.5px;height:17px;line-height:17px;font-size:12px;color:#4a4a4a;">1 KB</div>
</div>
<div style="left:537px;top:658px;width:564px;height:16px;background:#f0f0f0"></div>
<div style="left:553px;top:658px;width:498px;height:16px;background:#cdcdcd"></div>
<svg style="left:541px;top:661px;" width="6" height="9" viewBox="0 0 6 9"><path d="M5 1 L1.500 4.500 L5 8" fill="none" stroke="#222" stroke-width="1.700"/></svg>
<svg style="left:1089px;top:661px;" width="6" height="9" viewBox="0 0 6 9"><path d="M1 1 L4.500 4.500 L1 8" fill="none" stroke="#222" stroke-width="1.700"/></svg>
<div class="t" style="left:1144px;top:296.5px;height:23px;line-height:23px;font-size:16.5px;color:#1e3250;letter-spacing:-1.50px">KEYBOARD.EXE</div>
<div class="t" style="left:1144px;top:322.0px;height:17px;line-height:17px;font-size:12px;color:#1e1e1e;letter-spacing:0.16px">Application</div>
<div style="left:1145px;top:355px;width:94px;height:70px;background:linear-gradient(90deg,#e4e6ea,#f7f8fa 60%,#d9dce2);border:1px solid #c2c5cb"></div>
<div style="left:1147px;top:359px;width:90px;height:60px;background:#fff;border:1px solid #b9bcc2"></div>
<div style="left:1149px;top:364px;width:50px;height:1px;background:#d5d5d5"></div>
<div class="t" style="left:158px;top:677.5px;height:17px;line-height:17px;font-size:12px;color:#4a4a4a;letter-spacing:-0.23px">191 items</div>
<div style="left:219px;top:679px;width:1px;height:15px;background:#ececec"></div>
<div class="t" style="left:229px;top:677.5px;height:17px;line-height:17px;font-size:12px;color:#4a4a4a;letter-spacing:-0.31px">1 item selected  140 KB</div>
<div style="left:360px;top:679px;width:1px;height:15px;background:#ececec"></div>
<div style="left:1347px;top:674px;width:22px;height:23px;background:#cce8ff;border:1px solid #3a9ad9"></div>
<div style="left:1369px;top:674px;width:22px;height:23px;"></div>
<svg style="left:1350px;top:679px;" width="16" height="14" viewBox="0 0 16 14"><g fill="none" stroke="#555" stroke-width="1"><rect x=".5" y="1.500" width="3" height="2.500"/><rect x=".5" y="6" width="3" height="2.500"/><rect x=".5" y="10.500" width="3" height="2.500"/></g><path d="M6 2.500 H15 M6 7 H15 M6 11.500 H15" stroke="#555" stroke-width="1"/><rect x="1.300" y="2.300" width="1.300" height="1" fill="#c33"/><rect x="1.300" y="6.800" width="1.300" height="1" fill="#c33"/></svg>
<svg style="left:1373px;top:680px;" width="14" height="11" viewBox="0 0 14 11"><rect x=".5" y=".5" width="13" height="10" fill="#dfe9f2" stroke="#555"/><rect x="2" y="2" width="10" height="7" fill="#5b90c0"/><path d="M2 9 L5.500 5 L8 7.500 L10 6 L12 9 Z" fill="#4e8f4e"/></svg>
<div style="left:62px;top:0px;width:1538px;height:900px;background:rgba(0,0,0,.44)"></div>
<div style="left:62px;top:368px;width:1538px;height:164px;background:#1d57ba"></div>
<div class="t" style="left:460.5px;top:388.4px;height:36px;line-height:36px;font-size:27px;color:#fff;-webkit-text-stroke:.55px #1d57ba;letter-spacing:-0.52px">This app can’t run on your PC</div>
<div class="t" style="left:460.5px;top:434.5px;height:21px;line-height:21px;font-size:15px;color:#fff;-webkit-text-stroke:.2px #1d57ba;letter-spacing:-0.25px">To find a version for your PC, check with the software publisher.</div>
<div style="left:1050px;top:475px;width:90px;height:32px;background:#1fa9ff;border:2px solid #fff"></div>
<div class="t" style="left:1050px;top:475px;width:90px;height:33px;line-height:33px;text-align:center;font-size:14.5px;color:#fff;letter-spacing:-0.22px">Close</div>
<div id="taskbar" style="left:0;top:0;width:62px;height:900px;overflow:hidden;background:linear-gradient(100deg,rgba(0,0,0,.06),rgba(255,255,255,.03) 60%,rgba(255,255,255,.05)),linear-gradient(#854949 0,#8a4e4f 120px,#94575a 230px,#96595b 330px,#8f5456 367px,#8f5456 533px,#8f5658 600px,#8c5557 700px,#90595b 900px)">
<div style="left:0px;top:368px;width:62px;height:164px;background:#7d4c69"></div>
<div style="left:1px;top:17px;width:60px;height:44px;background:rgba(255,255,255,.19);border:1px solid rgba(255,255,255,.34)"></div>
<div style="left:1px;top:65px;width:60px;height:44px;background:rgba(255,255,255,.19);border:1px solid rgba(255,255,255,.34)"></div>
<div style="left:1px;top:113px;width:53px;height:44px;background:rgba(255,255,255,.17);border:1px solid rgba(255,255,255,.34)"></div>
<div style="left:54px;top:113px;width:4px;height:44px;border:1px solid rgba(255,255,255,.34);border-left:none;background:rgba(255,255,255,.14)"></div>
<div style="left:58px;top:113px;width:3px;height:44px;border:1px solid rgba(255,255,255,.34);border-left:none;background:rgba(255,255,255,.14)"></div>
<div style="left:1px;top:161px;width:53px;height:44px;background:rgba(255,255,255,.32);border:1px solid rgba(255,255,255,.9)"></div>
<div style="left:54px;top:161px;width:4px;height:44px;border:1px solid rgba(255,255,255,.85);border-left:none;background:rgba(255,255,255,.25)"></div>
<div style="left:58px;top:161px;width:3px;height:44px;border:1px solid rgba(255,255,255,.85);border-left:none;background:rgba(255,255,255,.25)"></div>
<div style="left:1px;top:353px;width:60px;height:44px;background:rgba(255,255,255,.19);border:1px solid rgba(255,255,255,.34)"></div>
<div style="left:1px;top:401px;width:60px;height:44px;background:rgba(255,255,255,.19);border:1px solid rgba(255,255,255,.34)"></div>
<div style="left:1px;top:449px;width:60px;height:44px;background:rgba(255,255,255,.19);border:1px solid rgba(255,255,255,.34)"></div>
<div style="left:1px;top:497px;width:60px;height:44px;background:rgba(255,255,255,.19);border:1px solid rgba(255,255,255,.34)"></div>
<div style="left:1px;top:545px;width:60px;height:44px;background:rgba(255,255,255,.19);border:1px solid rgba(255,255,255,.34)"></div>
<svg style="left:15.5px;top:21.0px" width="30" height="38" viewBox="0 0 32 32" preserveAspectRatio="none"><ellipse cx="16" cy="29.500" rx="11" ry="1.800" fill="#3a2020" opacity=".35"/><path d="M4 28 V9 Q4 1 12 1 H22 Q29 1 29 9 V28 H26.500 V22 H20 V30 H17.500 V22 H6.500 V28 Z" fill="#8d9197"/><path d="M14 22 V9 Q14 1 21.500 1 Q29 1 29 9 V22 Z" fill="#a9adb2"/><path d="M4 22 V9 Q4 1 11 1 Q18 1 18 9 V22 Z" fill="#cfd2d6"/><path d="M5.500 9 Q5.500 3 11 3 Q9 3.500 16.500 9 Z" fill="#101830"/><path d="M5.500 9 Q5.500 3 11 3 Q16.500 3 16.500 9 Q11 6 5.500 9 Z" fill="#1b3f9a"/><rect x="7" y="12" width="7" height="4" fill="#fff"/><rect x="7" y="12" width="7" height="1.200" fill="#d23"/><rect x="7" y="13.800" width="7" height=".8" fill="#46c"/></svg>
<svg style="left:15.0px;top:71.0px" width="32" height="32" viewBox="0 0 32 32" preserveAspectRatio="none"><circle cx="16" cy="16" r="14.500" fill="#e33b2e"/><path d="M16 16 L3.450 8.750 A14.500 14.500 0 0 0 16 30.500 Z" fill="#2da94f"/><path d="M16 16 L16 30.500 A14.500 14.500 0 0 0 28.550 8.750 Z" fill="#fdd00d"/><path d="M16 16 L3.450 8.750 A14.500 14.500 0 0 1 28.550 8.750 Z" fill="#e33b2e"/><path d="M16 16 L9 28.600 L16 30.500 Z" fill="#2da94f"/><circle cx="16" cy="16" r="6.800" fill="#f4f4f4"/><circle cx="16" cy="16" r="5.400" fill="#4285e8"/></svg>
<svg style="left:11.0px;top:119.0px" width="32" height="32" viewBox="0 0 32 32" preserveAspectRatio="none"><ellipse cx="16" cy="30" rx="9" ry="1.500" fill="#3a2020" opacity=".3"/><circle cx="16" cy="15.500" r="14" fill="#1c4ea0"/><circle cx="18" cy="11" r="9" fill="#3f8fe0"/><circle cx="20" cy="9" r="5" fill="#8fd0f5"/><path d="M3 6 Q1 9 1.500 15 Q2 24 9 28 Q17 32 25 27 Q31 22 30 13 Q29.500 9 27 6 Q29 13 25 17.500 Q21 21 16 20 Q12 19 11.500 15.500 Q14 16 15.500 13.500 L12 11 Q12 8 14 6 Q10 6 8 9 Q6 8 5.500 5 Q4 7 4.500 10 Q3 8 3 6 Z" fill="#e55b14"/><path d="M5 20 Q8 28 17 29 Q26 28 29.500 17 Q27 24 19 25.500 Q10 26 5 20 Z" fill="#f8a41c"/><path d="M26 7 Q31 14 28 22 Q30 14 26 7 Z" fill="#fbd34a"/></svg>
<svg style="left:11.0px;top:167.0px" width="32" height="32" viewBox="0 0 32 32" preserveAspectRatio="none"><path d="M1 6 Q1 4 3 4 H11 Q12.500 4 13 5.500 H29 Q31 5.500 31 7.500 V27 H1 Z" fill="#e8cd6e"/><rect x="4" y="4.800" width="3" height="2" fill="#1fae3a"/><rect x="8" y="5" width="4" height="1.800" fill="#fff"/><path d="M11 8 H22 V12 H11 Z" fill="#f3dc86"/><rect x="12" y="7" width="3" height="2" fill="#d9382a"/><rect x="16" y="7.200" width="5" height="1.800" fill="#fff"/><path d="M19 11 Q19 9 21 9 H29 Q31 9 31 11 V14 H19 Z" fill="#f1d97e"/><rect x="21" y="9.500" width="3" height="2" fill="#2a8fe8"/><rect x="25" y="9.700" width="4" height="1.800" fill="#fff"/><path d="M1.500 12 H30.500 V27.500 H1.500 Z" fill="#fbeeb0" stroke="#e3c665" stroke-width=".7"/><path d="M5 30 V22 Q5 19.500 7.500 19.500 H25 Q27.500 19.500 27.500 22 V30 H21.500 V25 H11 V30 Z" fill="#8fd3f4" stroke="#58a9dc" stroke-width=".8"/><path d="M6 22 Q6 20.500 7.500 20.500 H25 Q26.500 20.500 26.500 22 V23 H6 Z" fill="#c5ecfc"/><circle cx="8" cy="21" r="2.200" fill="#fff"/></svg>
<svg style="left:15.0px;top:215.0px" width="32" height="32" viewBox="0 0 32 32" preserveAspectRatio="none"><path d="M26.500 14.500 A10.300 10.300 0 1 0 24.800 23" fill="none" stroke="#35aeee" stroke-width="6"/><path d="M8 16.800 H29.500" stroke="#35aeee" stroke-width="4.600"/><path d="M26.500 14.500 A10.300 10.300 0 0 0 9 10" fill="none" stroke="#63c8f8" stroke-width="3" opacity=".6"/><path d="M30.500 4 Q31 1 26 1 Q14 1 5 14 Q-1 24 2 29 Q4 31 8 29" fill="none" stroke="#f6b71a" stroke-width="2.200" stroke-linecap="round"/></svg>
<svg style="left:15.0px;top:263.0px" width="32" height="32" viewBox="0 0 32 32" preserveAspectRatio="none"><rect width="32" height="32" fill="#68217a"/><path d="M22.500 5 L11.500 14 L6.500 10 L4.500 11 V21 L6.500 22 L11.500 18 L22.500 27 L27.500 25 V7 Z M22.500 11.500 V20.500 L16.800 16 Z M7 13 L10 16 L7 19 Z" fill="#fff" fill-rule="evenodd"/></svg>
<svg style="left:15.0px;top:311.0px" width="32" height="32" viewBox="0 0 32 32" preserveAspectRatio="none"><rect width="32" height="32" fill="#1e7145"/><path d="M17 8 H26.500 V24 H17 Z" fill="#fff"/><path d="M19 11 H21.500 M23 11 H25.500 M19 14.500 H21.500 M23 14.500 H25.500 M19 18 H21.500 M23 18 H25.500 M19 21.500 H21.500 M23 21.500 H25.500" stroke="#1e7145" stroke-width="1.800"/><path d="M5 7.500 L18 5.500 V26.500 L5 24.500 Z" fill="#fff"/><path d="M8.300 11.500 L14.300 20.500 M14.300 11.500 L8.300 20.500" stroke="#1e7145" stroke-width="2.200"/></svg>
<svg style="left:15.0px;top:359.0px" width="32" height="32" viewBox="0 0 32 32" preserveAspectRatio="none"><path d="M16 1.500 L29.500 8.500 V23.500 L16 30.500 L2.500 23.500 V8.500 Z" fill="#151c50" stroke="#151c50" stroke-width="1.500" stroke-linejoin="round"/><path d="M16 3.800 L26.800 9.300 L16 15 L5.200 9.300 Z" fill="#cfe6e4"/><path d="M5 11 L15.300 16.300 V28 L5 22.600 Z" fill="#a9c5f2"/><path d="M9 13 L15.300 16.300 V28 L9 24.700 Z" fill="#dfeafb"/><path d="M27 11 L16.700 16.300 V28 L27 22.600 Z" fill="#e9eef0"/><path d="M27 11 L22 13.600 V25.300 L27 22.600 Z" fill="#aab8c2"/></svg>
<svg style="left:15.0px;top:407.0px" width="32" height="32" viewBox="0 0 32 32" preserveAspectRatio="none"><ellipse cx="15" cy="27.500" rx="8" ry="2.600" fill="#e2e2e2"/><path d="M12.500 19 H17 V27 H12.500 Z" fill="#cfcfcf"/><path d="M3.500 2.500 L25.500 4.500 L24.500 20.500 L2 17 Z" fill="#e8ecf0" stroke="#b5bcc5" stroke-width=".6"/><path d="M5 4.500 L24 6 L23 18.500 L3.800 15.600 Z" fill="#1530c8"/><path d="M13 6 L24 6 L23 18.500 L15 17.300 Z" fill="#7fa3f0"/><path d="M14.500 6.500 L20.500 16.500 H8.500 Z" fill="#f8d71c" stroke="#caa800" stroke-width=".5"/><rect x="13.900" y="9.500" width="1.300" height="4" fill="#222"/><rect x="13.900" y="14.300" width="1.300" height="1.300" fill="#222"/><path d="M9.500 21 L15 28 L29.500 9.500" fill="none" stroke="#3cb83c" stroke-width="3.600" stroke-linejoin="round"/></svg>
<svg style="left:15.0px;top:455.0px" width="32" height="32" viewBox="0 0 32 32" preserveAspectRatio="none"><ellipse cx="19" cy="28" rx="8" ry="2.500" fill="#dcdcdc"/><path d="M16.500 21 H21.500 V27 H16.500 Z" fill="#c8c8c8"/><path d="M2 8 L7.500 6.500 L8.500 23 L3 25 Z" fill="#d5d8dc" stroke="#aaa" stroke-width=".5"/><rect x="3.200" y="10" width="1.200" height="1.500" fill="#4c4"/><path d="M8 4 L29.500 6.500 L28.500 21.500 L9 22.500 Z" fill="#e9ecef" stroke="#b7bcc2" stroke-width=".6"/><path d="M10 6.300 L27.500 8.300 L26.700 19.700 L10.800 20.500 Z" fill="#fcfeff"/><path d="M10.500 15 L27 16 L26.700 19.700 L10.800 20.500 Z" fill="#cfe6f7"/><path d="M11 14.500 L13.500 13 L15 14.500 L16.500 9 L18 14 L20 15 L22.500 12.500 L24 15.500 L26.500 14.500" fill="none" stroke="#2f86c8" stroke-width="1.100"/></svg>
<svg style="left:15.0px;top:503.0px" width="32" height="32" viewBox="0 0 32 32" preserveAspectRatio="none"><rect width="32" height="32" fill="#2b579a"/><path d="M17 8 H26.500 V24 H17 Z" fill="#fff"/><path d="M19 11.500 H25 M19 15 H25 M19 18.500 H25 M19 22 H25" stroke="#2b579a" stroke-width="1.800"/><path d="M5 7.500 L18 5.500 V26.500 L5 24.500 Z" fill="#fff"/><path d="M7 12 L8.800 20.500 L11.200 13.500 L13.600 20.500 L15.500 12" fill="none" stroke="#2b579a" stroke-width="1.900"/></svg>
<svg style="left:15.0px;top:551.0px" width="32" height="32" viewBox="0 0 32 32" preserveAspectRatio="none"><path d="M1.500 9 Q-1 22 8 27 Q12 29 17 27.500 Q7 26 4 17 Q3 13 3.500 9 Z" fill="#fbb64a"/><rect x="4" y="4" width="12" height="10" fill="#fff"/><rect x="5" y="5" width="10" height="8" fill="#8ccf5a"/><rect x="2.500" y="13" width="13" height="11" fill="#fff"/><rect x="3.500" y="14" width="11" height="9" fill="#8cc6f0"/><rect x="15" y="13" width="13" height="11" fill="#fff"/><rect x="16" y="14" width="11" height="9" fill="#9ad468"/><rect x="11" y="2.500" width="18" height="14" fill="#fff" stroke="#ddd" stroke-width=".4"/><rect x="12.200" y="3.700" width="15.600" height="11.600" fill="#8fcdf5"/><circle cx="14.500" cy="13" r="8" fill="#f0541a"/><path d="M14.500 13 L8 8 M14.500 13 L20 6 M14.500 13 L22 14 M14.500 13 L10 20 M14.500 13 L18 20 M14.500 13 L6.500 14" stroke="#f89a2a" stroke-width="1.400"/><circle cx="14.500" cy="12.500" r="2.200" fill="#8a3a00"/></svg>
<svg style="left:44px;top:760px;" width="6" height="10" viewBox="0 0 6 10"><path d="M.5 .5 L5.500 5 L.5 9.500 Z" fill="#fff"/></svg>
<svg style="left:11px;top:781px;" width="18" height="16" viewBox="0 0 18 16"><path d="M2 1 V15" stroke="#fff" stroke-width="1.600"/><path d="M3.500 1.500 H8 V3 H16 L13.500 6.500 L16 10 H9 V8.500 H3.500 Z" fill="#fff"/><path d="M5 3 H8 V7 H5 Z" fill="#8e5557" opacity=".7"/></svg>
<div style="left:36px;top:781px;width:16px;height:16px;background:linear-gradient(#f59324,#df5c0a);border-radius:3px;color:#b04606;font-size:15px;font-weight:bold;line-height:13px;text-align:center">e</div>
<svg style="left:12px;top:805px;" width="17" height="16" viewBox="0 0 17 16"><rect x="5" y="3" width="11" height="8" fill="none" stroke="#fff" stroke-width="1.400"/><path d="M10.500 11 V14 M7 14.500 H14" stroke="#fff" stroke-width="1.400"/><rect x="1" y="1" width="4" height="6" fill="#8e5557" stroke="#fff" stroke-width="1.200"/><path d="M3 7 V13 H6" fill="none" stroke="#fff" stroke-width="1.200"/></svg>
<svg style="left:36px;top:805px;" width="17" height="16" viewBox="0 0 17 16"><path d="M1 5.500 H4 L8 2 V14 L4 10.500 H1 Z" fill="#fff"/><path d="M10 5.500 Q11.500 8 10 10.500 M12 3.500 Q14.800 8 12 12.500 M14 2 Q18 8 14 14" fill="none" stroke="#fff" stroke-width="1.100"/></svg>
<svg style="left:12px;top:829px;" width="17" height="17" viewBox="0 0 17 17"><path d="M4.500 1 L8.500 3.500 L4.500 6 L.5 3.500 Z M12.500 1 L16.500 3.500 L12.500 6 L8.500 3.500 Z M4.500 6 L8.500 8.500 L4.500 11 L.5 8.500 Z M12.500 6 L16.500 8.500 L12.500 11 L8.500 8.500 Z M8.500 9.500 L12 11.800 L8.500 14 L5 11.800 Z" fill="#3d9ae8" stroke="#e8f3fd" stroke-width=".5"/><circle cx="12.500" cy="12.500" r="3.800" fill="#2fa84a" stroke="#fff" stroke-width=".6"/><path d="M10.700 12.500 L12 14 L14.400 11" fill="none" stroke="#fff" stroke-width="1.100"/></svg>
<div class="t" style="left:0;top:851px;width:61px;text-align:center;font-size:12px;line-height:16px;color:#fff;letter-spacing:-.2px">10:28 PM</div>
<div class="t" style="left:0;top:868px;width:61px;text-align:center;font-size:12px;line-height:16px;color:#fff;letter-spacing:-.45px">2013-03-26</div>
</div>
</body></html>
